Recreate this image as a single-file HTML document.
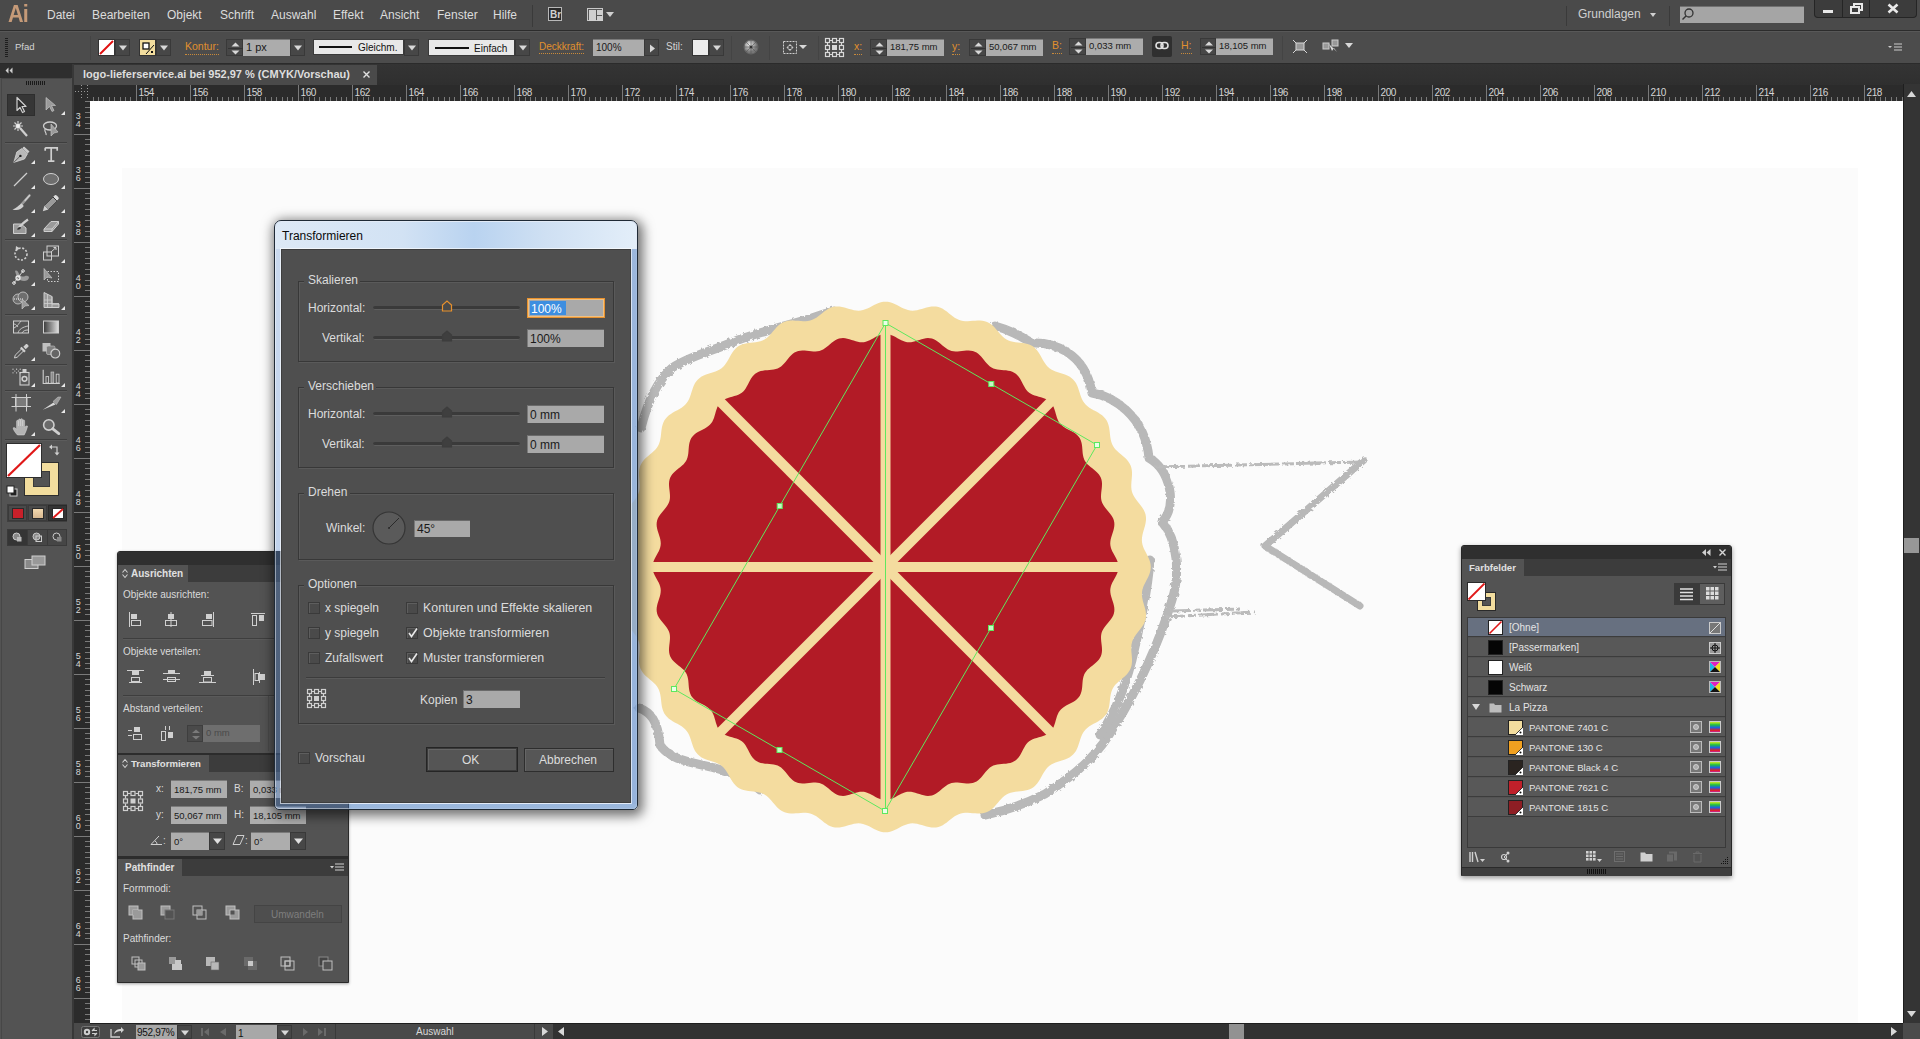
<!DOCTYPE html>
<html><head><meta charset="utf-8"><style>
html,body{margin:0;padding:0;width:1920px;height:1039px;overflow:hidden;background:#535353;}
body{position:relative;font-family:"Liberation Sans",sans-serif;}
div{position:absolute;box-sizing:border-box;}
.t{white-space:nowrap;line-height:1.15;}
svg{overflow:visible}
</style></head><body>
<div style="left:0px;top:64px;width:74px;height:975px;background:#535353;"></div>
<div style="left:72px;top:64px;width:2px;height:975px;background:#383838;"></div>
<div style="left:74px;top:64px;width:1846px;height:21px;background:linear-gradient(#343434,#2f2f2f);"></div>
<div style="left:74px;top:65px;width:303px;height:20px;background:#4a4a4a;"></div>
<div class="t" style="left:83px;top:67px;font-size:11px;color:#dedede;font-weight:bold;line-height:14px;">logo-lieferservice.ai bei 952,97 % (CMYK/Vorschau)</div>
<svg style="position:absolute;left:363px;top:71px" width="7" height="7"><path d="M0.5 0.5L6.5 6.5M6.5 0.5L0.5 6.5" stroke="#e0e0e0" stroke-width="1.4"/></svg>
<svg style="position:absolute;left:0;top:0" width="1920" height="1039"><rect x="74" y="85" width="1829" height="16" fill="#2b2b2b"/><rect x="74" y="101" width="16" height="922" fill="#2b2b2b"/><path d="M93.5 97V101M98.5 97V101M103.5 97V101M109.5 97V101M114.5 97V101M120.5 97V101M125.5 97V101M130.5 97V101M136.5 85V101M141.5 97V101M147.5 97V101M152.5 97V101M157.5 97V101M163.5 97V101M168.5 97V101M174.5 97V101M179.5 97V101M184.5 97V101M190.5 85V101M195.5 97V101M201.5 97V101M206.5 97V101M211.5 97V101M217.5 97V101M222.5 97V101M228.5 97V101M233.5 97V101M238.5 97V101M244.5 85V101M249.5 97V101M255.5 97V101M260.5 97V101M265.5 97V101M271.5 97V101M276.5 97V101M282.5 97V101M287.5 97V101M292.5 97V101M298.5 85V101M303.5 97V101M309.5 97V101M314.5 97V101M319.5 97V101M325.5 97V101M330.5 97V101M336.5 97V101M341.5 97V101M346.5 97V101M352.5 85V101M357.5 97V101M363.5 97V101M368.5 97V101M373.5 97V101M379.5 97V101M384.5 97V101M390.5 97V101M395.5 97V101M400.5 97V101M406.5 85V101M411.5 97V101M417.5 97V101M422.5 97V101M427.5 97V101M433.5 97V101M438.5 97V101M444.5 97V101M449.5 97V101M454.5 97V101M460.5 85V101M465.5 97V101M471.5 97V101M476.5 97V101M481.5 97V101M487.5 97V101M492.5 97V101M498.5 97V101M503.5 97V101M508.5 97V101M514.5 85V101M519.5 97V101M525.5 97V101M530.5 97V101M535.5 97V101M541.5 97V101M546.5 97V101M552.5 97V101M557.5 97V101M562.5 97V101M568.5 85V101M573.5 97V101M579.5 97V101M584.5 97V101M589.5 97V101M595.5 97V101M600.5 97V101M606.5 97V101M611.5 97V101M616.5 97V101M622.5 85V101M627.5 97V101M633.5 97V101M638.5 97V101M643.5 97V101M649.5 97V101M654.5 97V101M660.5 97V101M665.5 97V101M670.5 97V101M676.5 85V101M681.5 97V101M687.5 97V101M692.5 97V101M697.5 97V101M703.5 97V101M708.5 97V101M714.5 97V101M719.5 97V101M724.5 97V101M730.5 85V101M735.5 97V101M741.5 97V101M746.5 97V101M751.5 97V101M757.5 97V101M762.5 97V101M768.5 97V101M773.5 97V101M778.5 97V101M784.5 85V101M789.5 97V101M795.5 97V101M800.5 97V101M805.5 97V101M811.5 97V101M816.5 97V101M822.5 97V101M827.5 97V101M832.5 97V101M838.5 85V101M843.5 97V101M849.5 97V101M854.5 97V101M859.5 97V101M865.5 97V101M870.5 97V101M876.5 97V101M881.5 97V101M886.5 97V101M892.5 85V101M897.5 97V101M903.5 97V101M908.5 97V101M913.5 97V101M919.5 97V101M924.5 97V101M930.5 97V101M935.5 97V101M940.5 97V101M946.5 85V101M951.5 97V101M957.5 97V101M962.5 97V101M967.5 97V101M973.5 97V101M978.5 97V101M984.5 97V101M989.5 97V101M994.5 97V101M1000.5 85V101M1005.5 97V101M1011.5 97V101M1016.5 97V101M1021.5 97V101M1027.5 97V101M1032.5 97V101M1038.5 97V101M1043.5 97V101M1048.5 97V101M1054.5 85V101M1059.5 97V101M1065.5 97V101M1070.5 97V101M1075.5 97V101M1081.5 97V101M1086.5 97V101M1092.5 97V101M1097.5 97V101M1102.5 97V101M1108.5 85V101M1113.5 97V101M1119.5 97V101M1124.5 97V101M1129.5 97V101M1135.5 97V101M1140.5 97V101M1146.5 97V101M1151.5 97V101M1156.5 97V101M1162.5 85V101M1167.5 97V101M1173.5 97V101M1178.5 97V101M1183.5 97V101M1189.5 97V101M1194.5 97V101M1200.5 97V101M1205.5 97V101M1210.5 97V101M1216.5 85V101M1221.5 97V101M1227.5 97V101M1232.5 97V101M1237.5 97V101M1243.5 97V101M1248.5 97V101M1254.5 97V101M1259.5 97V101M1264.5 97V101M1270.5 85V101M1275.5 97V101M1281.5 97V101M1286.5 97V101M1291.5 97V101M1297.5 97V101M1302.5 97V101M1308.5 97V101M1313.5 97V101M1318.5 97V101M1324.5 85V101M1329.5 97V101M1335.5 97V101M1340.5 97V101M1345.5 97V101M1351.5 97V101M1356.5 97V101M1362.5 97V101M1367.5 97V101M1372.5 97V101M1378.5 85V101M1383.5 97V101M1389.5 97V101M1394.5 97V101M1399.5 97V101M1405.5 97V101M1410.5 97V101M1416.5 97V101M1421.5 97V101M1426.5 97V101M1432.5 85V101M1437.5 97V101M1443.5 97V101M1448.5 97V101M1453.5 97V101M1459.5 97V101M1464.5 97V101M1470.5 97V101M1475.5 97V101M1480.5 97V101M1486.5 85V101M1491.5 97V101M1497.5 97V101M1502.5 97V101M1507.5 97V101M1513.5 97V101M1518.5 97V101M1524.5 97V101M1529.5 97V101M1534.5 97V101M1540.5 85V101M1545.5 97V101M1551.5 97V101M1556.5 97V101M1561.5 97V101M1567.5 97V101M1572.5 97V101M1578.5 97V101M1583.5 97V101M1588.5 97V101M1594.5 85V101M1599.5 97V101M1605.5 97V101M1610.5 97V101M1615.5 97V101M1621.5 97V101M1626.5 97V101M1632.5 97V101M1637.5 97V101M1642.5 97V101M1648.5 85V101M1653.5 97V101M1659.5 97V101M1664.5 97V101M1669.5 97V101M1675.5 97V101M1680.5 97V101M1686.5 97V101M1691.5 97V101M1696.5 97V101M1702.5 85V101M1707.5 97V101M1713.5 97V101M1718.5 97V101M1723.5 97V101M1729.5 97V101M1734.5 97V101M1740.5 97V101M1745.5 97V101M1750.5 97V101M1756.5 85V101M1761.5 97V101M1767.5 97V101M1772.5 97V101M1777.5 97V101M1783.5 97V101M1788.5 97V101M1794.5 97V101M1799.5 97V101M1804.5 97V101M1810.5 85V101M1815.5 97V101M1821.5 97V101M1826.5 97V101M1831.5 97V101M1837.5 97V101M1842.5 97V101M1848.5 97V101M1853.5 97V101M1858.5 97V101M1864.5 85V101M1869.5 97V101M1875.5 97V101M1880.5 97V101M1885.5 97V101M1891.5 97V101M1896.5 97V101M1902.5 97V101" stroke="#7a7a7a" stroke-width="1"/><g font-family="Liberation Sans" font-size="10" fill="#d6d6d6" letter-spacing="-0.5"><text x="138.6" y="96">154</text><text x="192.6" y="96">156</text><text x="246.6" y="96">158</text><text x="300.6" y="96">160</text><text x="354.6" y="96">162</text><text x="408.6" y="96">164</text><text x="462.6" y="96">166</text><text x="516.6" y="96">168</text><text x="570.6" y="96">170</text><text x="624.6" y="96">172</text><text x="678.6" y="96">174</text><text x="732.6" y="96">176</text><text x="786.6" y="96">178</text><text x="840.6" y="96">180</text><text x="894.6" y="96">182</text><text x="948.6" y="96">184</text><text x="1002.6" y="96">186</text><text x="1056.6" y="96">188</text><text x="1110.6" y="96">190</text><text x="1164.6" y="96">192</text><text x="1218.6" y="96">194</text><text x="1272.6" y="96">196</text><text x="1326.6" y="96">198</text><text x="1380.6" y="96">200</text><text x="1434.6" y="96">202</text><text x="1488.6" y="96">204</text><text x="1542.6" y="96">206</text><text x="1596.6" y="96">208</text><text x="1650.6" y="96">210</text><text x="1704.6" y="96">212</text><text x="1758.6" y="96">214</text><text x="1812.6" y="96">216</text><text x="1866.6" y="96">218</text></g><path d="M85 101.5H90M85 107.5H90M85 112.5H90M85 117.5H90M85 123.5H90M85 128.5H90M74 134.5H90M85 139.5H90M85 144.5H90M85 150.5H90M85 155.5H90M85 161.5H90M85 166.5H90M85 172.5H90M85 177.5H90M85 182.5H90M74 188.5H90M85 193.5H90M85 198.5H90M85 204.5H90M85 209.5H90M85 215.5H90M85 220.5H90M85 226.5H90M85 231.5H90M85 236.5H90M74 242.5H90M85 247.5H90M85 252.5H90M85 258.5H90M85 263.5H90M85 269.5H90M85 274.5H90M85 280.5H90M85 285.5H90M85 290.5H90M74 296.5H90M85 301.5H90M85 306.5H90M85 312.5H90M85 317.5H90M85 323.5H90M85 328.5H90M85 334.5H90M85 339.5H90M85 344.5H90M74 350.5H90M85 355.5H90M85 360.5H90M85 366.5H90M85 371.5H90M85 377.5H90M85 382.5H90M85 388.5H90M85 393.5H90M85 398.5H90M74 404.5H90M85 409.5H90M85 414.5H90M85 420.5H90M85 425.5H90M85 431.5H90M85 436.5H90M85 442.5H90M85 447.5H90M85 452.5H90M74 458.5H90M85 463.5H90M85 468.5H90M85 474.5H90M85 479.5H90M85 485.5H90M85 490.5H90M85 496.5H90M85 501.5H90M85 506.5H90M74 512.5H90M85 517.5H90M85 522.5H90M85 528.5H90M85 533.5H90M85 539.5H90M85 544.5H90M85 550.5H90M85 555.5H90M85 560.5H90M74 566.5H90M85 571.5H90M85 576.5H90M85 582.5H90M85 587.5H90M85 593.5H90M85 598.5H90M85 604.5H90M85 609.5H90M85 614.5H90M74 620.5H90M85 625.5H90M85 630.5H90M85 636.5H90M85 641.5H90M85 647.5H90M85 652.5H90M85 658.5H90M85 663.5H90M85 668.5H90M74 674.5H90M85 679.5H90M85 684.5H90M85 690.5H90M85 695.5H90M85 701.5H90M85 706.5H90M85 712.5H90M85 717.5H90M85 722.5H90M74 728.5H90M85 733.5H90M85 738.5H90M85 744.5H90M85 749.5H90M85 755.5H90M85 760.5H90M85 766.5H90M85 771.5H90M85 776.5H90M74 782.5H90M85 787.5H90M85 792.5H90M85 798.5H90M85 803.5H90M85 809.5H90M85 814.5H90M85 820.5H90M85 825.5H90M85 830.5H90M74 836.5H90M85 841.5H90M85 846.5H90M85 852.5H90M85 857.5H90M85 863.5H90M85 868.5H90M85 874.5H90M85 879.5H90M85 884.5H90M74 890.5H90M85 895.5H90M85 900.5H90M85 906.5H90M85 911.5H90M85 917.5H90M85 922.5H90M85 928.5H90M85 933.5H90M85 938.5H90M74 944.5H90M85 949.5H90M85 954.5H90M85 960.5H90M85 965.5H90M85 971.5H90M85 976.5H90M85 982.5H90M85 987.5H90M85 992.5H90M74 998.5H90M85 1003.5H90M85 1008.5H90M85 1014.5H90M85 1019.5H90" stroke="#7a7a7a" stroke-width="1"/><g font-family="Liberation Sans" font-size="9" fill="#d6d6d6"><text x="75.8" y="118.7">3</text><text x="75.8" y="127.1">4</text><text x="75.8" y="172.7">3</text><text x="75.8" y="181.1">6</text><text x="75.8" y="226.7">3</text><text x="75.8" y="235.1">8</text><text x="75.8" y="280.7">4</text><text x="75.8" y="289.1">0</text><text x="75.8" y="334.7">4</text><text x="75.8" y="343.1">2</text><text x="75.8" y="388.7">4</text><text x="75.8" y="397.1">4</text><text x="75.8" y="442.7">4</text><text x="75.8" y="451.1">6</text><text x="75.8" y="496.7">4</text><text x="75.8" y="505.1">8</text><text x="75.8" y="550.7">5</text><text x="75.8" y="559.1">0</text><text x="75.8" y="604.7">5</text><text x="75.8" y="613.1">2</text><text x="75.8" y="658.7">5</text><text x="75.8" y="667.1">4</text><text x="75.8" y="712.7">5</text><text x="75.8" y="721.1">6</text><text x="75.8" y="766.7">5</text><text x="75.8" y="775.1">8</text><text x="75.8" y="820.7">6</text><text x="75.8" y="829.1">0</text><text x="75.8" y="874.7">6</text><text x="75.8" y="883.1">2</text><text x="75.8" y="928.7">6</text><text x="75.8" y="937.1">4</text><text x="75.8" y="982.7">6</text><text x="75.8" y="991.1">6</text></g><path d="M75 91.5H89M87.5 85V99M81.5 85V99" stroke="#9a9a9a" stroke-dasharray="1 2" stroke-width="1"/></svg>
<div style="left:90px;top:101px;width:1813px;height:922px;background:#ffffff;"></div>
<div style="left:122px;top:168px;width:1736px;height:855px;background:#fbfbfb;"></div>
<div style="left:1903px;top:84px;width:17px;height:939px;background:#343434;border-left:1px solid #1e1e1e;box-sizing:border-box;"></div>
<svg style="position:absolute;left:1906px;top:90px" width="11" height="8"><path d="M1 7H10L5.5 1Z" fill="#d8d8d8"/></svg>
<svg style="position:absolute;left:1906px;top:1010px" width="11" height="8"><path d="M1 1H10L5.5 7Z" fill="#d8d8d8"/></svg>
<div style="left:1904px;top:538px;width:15px;height:15px;background:#979797;"></div>
<div style="left:74px;top:1023px;width:1846px;height:16px;background:#4a4a4a;"></div>
<div style="left:90px;top:1023px;width:1813px;height:1px;background:#1e1e1e;"></div>
<div style="left:553px;top:1024px;width:1350px;height:15px;background:#323232;"></div>
<div style="left:1229px;top:1024px;width:15px;height:15px;background:#929292;"></div>
<div style="left:1903px;top:1023px;width:17px;height:16px;background:#4b4b4b;"></div>
<svg style="position:absolute;left:1889px;top:1026px" width="9" height="11"><path d="M2 1V10L8 5.5Z" fill="#d8d8d8"/></svg>
<svg style="position:absolute;left:557px;top:1026px" width="9" height="11"><path d="M7 1V10L1 5.5Z" fill="#d8d8d8"/></svg>
<svg style="position:absolute;left:540px;top:1026px" width="9" height="11"><path d="M2 1V10L8 5.5Z" fill="#d8d8d8"/></svg>
<div style="left:534px;top:1024px;width:1px;height:15px;background:#3a3a3a;"></div>
<div style="left:335px;top:1024px;width:1px;height:15px;background:#3a3a3a;"></div>
<svg style="position:absolute;left:81px;top:1026px" width="20" height="12"><rect x="0.5" y="0.5" width="18" height="11" rx="2" fill="#3e3e3e" stroke="#777"/><circle cx="6" cy="6" r="3.2" fill="#d0d0d0"/><circle cx="6" cy="6" r="1.2" fill="#3e3e3e"/><path d="M11 5L13 3V4.5H16M16 7L14 9V7.5H11" stroke="#d0d0d0" stroke-width="1.2" fill="none"/></svg>
<svg style="position:absolute;left:110px;top:1025px" width="15" height="13"><path d="M1 4V12H10" stroke="#d0d0d0" stroke-width="1.3" fill="none"/><path d="M4 9C5 5 8 4 11 4V2L14 5L11 8V6C8 6 6 7 4 9Z" fill="#d0d0d0"/></svg>
<div style="left:136px;top:1025px;width:41px;height:14px;background:#a8a8a8;"><div class="t" style="left:1px;top:1px;font-size:10px;color:#111;line-height:13px;letter-spacing:-0.3px">952,97%</div></div>
<div style="left:177px;top:1025px;width:15px;height:14px;background:#474747;border:1px solid #393939;box-sizing:border-box;"><svg style="position:absolute;left:3px;top:4px" width="8" height="6"><path d="M0 0.5H8L4 5.5Z" fill="#d8d8d8"/></svg></div>
<svg style="position:absolute;left:201px;top:1027px" width="30" height="10"><path d="M1 1V9" stroke="#6a6a6a" stroke-width="2"/><path d="M8 1V9L3 5Z" fill="#6a6a6a"/><path d="M25 1V9L19 5Z" fill="#6a6a6a"/></svg>
<div style="left:236px;top:1025px;width:41px;height:14px;background:#a8a8a8;"><div class="t" style="left:2px;top:2px;font-size:10px;color:#111;line-height:13px">1</div></div>
<div style="left:277px;top:1025px;width:15px;height:14px;background:#474747;border:1px solid #393939;box-sizing:border-box;"><svg style="position:absolute;left:3px;top:4px" width="8" height="6"><path d="M0 0.5H8L4 5.5Z" fill="#d8d8d8"/></svg></div>
<svg style="position:absolute;left:300px;top:1027px" width="30" height="10"><path d="M3 1V9L8 5Z" fill="#6a6a6a"/><path d="M18 1V9L23 5Z" fill="#6a6a6a"/><path d="M25 1V9" stroke="#6a6a6a" stroke-width="2"/></svg>
<div class="t" style="left:416px;top:1025px;font-size:10px;color:#d8d8d8;font-weight:normal;line-height:13px;">Auswahl</div>
<svg style="position:absolute;left:0;top:0" width="1920" height="1039"><defs><clipPath id="cv"><rect x="90" y="100" width="1813" height="923"/></clipPath></defs><g clip-path="url(#cv)"><filter id="rough" x="-5%" y="-5%" width="110%" height="110%"><feTurbulence type="fractalNoise" baseFrequency="0.3" numOctaves="2" seed="3" result="n"/><feDisplacementMap in="SourceGraphic" in2="n" scale="3.5"/></filter><g filter="url(#rough)"><path d="M641 428 C648 400 658 380 672 368 C690 356 710 352 738 340 C760 332 785 326 812 318 C820 315 826 313 834 311" fill="none" stroke="#b8b8b8" stroke-width="9" stroke-linecap="round" stroke-linejoin="round"/><path d="M995 326 C1010 330 1020 336 1032 343 C1050 342 1085 350 1092 393 C1112 396 1145 415 1149 458 C1170 470 1178 505 1162 522 C1178 540 1180 575 1172 600 C1160 640 1138 690 1115 725 C1100 752 1080 772 1045 794 C1025 804 1005 811 985 815" fill="none" stroke="#b8b8b8" stroke-width="9" stroke-linecap="round" stroke-linejoin="round"/><path d="M1150 560 C1148 590 1140 625 1132 660 C1124 690 1116 710 1100 735" fill="none" stroke="#b8b8b8" stroke-width="9" stroke-linecap="round" stroke-linejoin="round"/><path d="M639 708 C650 712 658 720 660 745 C670 760 690 762 715 768 C730 772 745 776 760 790" fill="none" stroke="#b8b8b8" stroke-width="9" stroke-linecap="round" stroke-linejoin="round"/><path d="M1155 467 L1362 462" stroke="#bbbbbb" stroke-width="3" fill="none" stroke-dasharray="30 3 12 2"/><path d="M1364 460 L1265 546 L1360 606" stroke="#b8b8b8" stroke-width="7" fill="none" stroke-linecap="round" stroke-linejoin="round"/><path d="M1165 617 L1255 612M1170 611L1240 609" stroke="#bbbbbb" stroke-width="3" fill="none" stroke-dasharray="20 3 8 2"/></g><path d="M1150.80,567.00 L1150.64,564.69 L1150.18,562.38 L1149.45,560.09 L1148.51,557.82 L1147.41,555.56 L1146.24,553.33 L1145.09,551.12 L1144.03,548.92 L1143.13,546.72 L1142.45,544.52 L1142.02,542.30 L1141.87,540.05 L1141.99,537.78 L1142.34,535.46 L1142.88,533.12 L1143.54,530.73 L1144.26,528.33 L1144.94,525.91 L1145.51,523.49 L1145.89,521.09 L1146.03,518.71 L1145.89,516.39 L1145.44,514.12 L1144.68,511.91 L1143.64,509.77 L1142.37,507.70 L1140.92,505.68 L1139.36,503.71 L1137.78,501.76 L1136.25,499.81 L1134.86,497.85 L1133.64,495.85 L1132.67,493.79 L1131.95,491.65 L1131.49,489.44 L1131.28,487.14 L1131.27,484.77 L1131.41,482.33 L1131.63,479.84 L1131.85,477.34 L1132.00,474.84 L1132.01,472.38 L1131.80,469.98 L1131.35,467.67 L1130.61,465.47 L1129.57,463.40 L1128.27,461.44 L1126.72,459.60 L1124.97,457.87 L1123.10,456.21 L1121.17,454.59 L1119.26,452.99 L1117.43,451.36 L1115.76,449.68 L1114.29,447.90 L1113.04,446.01 L1112.04,444.00 L1111.28,441.85 L1110.72,439.58 L1110.32,437.20 L1110.02,434.75 L1109.76,432.25 L1109.47,429.75 L1109.07,427.30 L1108.50,424.93 L1107.72,422.69 L1106.70,420.59 L1105.41,418.67 L1103.87,416.92 L1102.09,415.34 L1100.12,413.91 L1098.01,412.60 L1095.82,411.37 L1093.61,410.18 L1091.45,408.97 L1089.41,407.69 L1087.53,406.30 L1085.84,404.77 L1084.35,403.08 L1083.09,401.21 L1082.01,399.17 L1081.09,396.98 L1080.29,394.67 L1079.54,392.29 L1078.78,389.89 L1077.97,387.52 L1077.03,385.25 L1075.93,383.11 L1074.62,381.15 L1073.10,379.40 L1071.35,377.88 L1069.39,376.57 L1067.25,375.47 L1064.98,374.53 L1062.61,373.72 L1060.21,372.96 L1057.83,372.21 L1055.52,371.41 L1053.33,370.49 L1051.29,369.41 L1049.42,368.15 L1047.73,366.66 L1046.20,364.97 L1044.81,363.09 L1043.53,361.05 L1042.32,358.89 L1041.13,356.68 L1039.90,354.49 L1038.59,352.38 L1037.16,350.41 L1035.58,348.63 L1033.83,347.09 L1031.91,345.80 L1029.81,344.78 L1027.57,344.00 L1025.20,343.43 L1022.75,343.03 L1020.25,342.74 L1017.75,342.48 L1015.30,342.18 L1012.92,341.78 L1010.65,341.22 L1008.50,340.46 L1006.49,339.46 L1004.60,338.21 L1002.82,336.74 L1001.14,335.07 L999.51,333.24 L997.91,331.33 L996.29,329.40 L994.63,327.53 L992.90,325.78 L991.06,324.23 L989.10,322.93 L987.03,321.89 L984.83,321.15 L982.52,320.70 L980.12,320.49 L977.66,320.50 L975.16,320.65 L972.66,320.87 L970.17,321.09 L967.73,321.23 L965.36,321.22 L963.06,321.01 L960.85,320.55 L958.71,319.83 L956.65,318.86 L954.65,317.64 L952.69,316.25 L950.74,314.72 L948.79,313.14 L946.82,311.58 L944.80,310.13 L942.73,308.86 L940.59,307.82 L938.38,307.06 L936.11,306.61 L933.79,306.47 L931.41,306.61 L929.01,306.99 L926.59,307.56 L924.17,308.24 L921.77,308.96 L919.38,309.62 L917.04,310.16 L914.72,310.51 L912.45,310.63 L910.20,310.48 L907.98,310.05 L905.78,309.37 L903.58,308.47 L901.38,307.41 L899.17,306.26 L896.94,305.09 L894.68,303.99 L892.41,303.05 L890.12,302.32 L887.81,301.86 L885.50,301.70 L883.19,301.86 L880.88,302.32 L878.59,303.05 L876.32,303.99 L874.06,305.09 L871.83,306.26 L869.62,307.41 L867.42,308.47 L865.22,309.37 L863.02,310.05 L860.80,310.48 L858.55,310.63 L856.28,310.51 L853.96,310.16 L851.62,309.62 L849.23,308.96 L846.83,308.24 L844.41,307.56 L841.99,306.99 L839.59,306.61 L837.21,306.47 L834.89,306.61 L832.62,307.06 L830.41,307.82 L828.27,308.86 L826.20,310.13 L824.18,311.58 L822.21,313.14 L820.26,314.72 L818.31,316.25 L816.35,317.64 L814.35,318.86 L812.29,319.83 L810.15,320.55 L807.94,321.01 L805.64,321.22 L803.27,321.23 L800.83,321.09 L798.34,320.87 L795.84,320.65 L793.34,320.50 L790.88,320.49 L788.48,320.70 L786.17,321.15 L783.97,321.89 L781.90,322.93 L779.94,324.23 L778.10,325.78 L776.37,327.53 L774.71,329.40 L773.09,331.33 L771.49,333.24 L769.86,335.07 L768.18,336.74 L766.40,338.21 L764.51,339.46 L762.50,340.46 L760.35,341.22 L758.08,341.78 L755.70,342.18 L753.25,342.48 L750.75,342.74 L748.25,343.03 L745.80,343.43 L743.43,344.00 L741.19,344.78 L739.09,345.80 L737.17,347.09 L735.42,348.63 L733.84,350.41 L732.41,352.38 L731.10,354.49 L729.87,356.68 L728.68,358.89 L727.47,361.05 L726.19,363.09 L724.80,364.97 L723.27,366.66 L721.58,368.15 L719.71,369.41 L717.67,370.49 L715.48,371.41 L713.17,372.21 L710.79,372.96 L708.39,373.72 L706.02,374.53 L703.75,375.47 L701.61,376.57 L699.65,377.88 L697.90,379.40 L696.38,381.15 L695.07,383.11 L693.97,385.25 L693.03,387.52 L692.22,389.89 L691.46,392.29 L690.71,394.67 L689.91,396.98 L688.99,399.17 L687.91,401.21 L686.65,403.08 L685.16,404.77 L683.47,406.30 L681.59,407.69 L679.55,408.97 L677.39,410.18 L675.18,411.37 L672.99,412.60 L670.88,413.91 L668.91,415.34 L667.13,416.92 L665.59,418.67 L664.30,420.59 L663.28,422.69 L662.50,424.93 L661.93,427.30 L661.53,429.75 L661.24,432.25 L660.98,434.75 L660.68,437.20 L660.28,439.58 L659.72,441.85 L658.96,444.00 L657.96,446.01 L656.71,447.90 L655.24,449.68 L653.57,451.36 L651.74,452.99 L649.83,454.59 L647.90,456.21 L646.03,457.87 L644.28,459.60 L642.73,461.44 L641.43,463.40 L640.39,465.47 L639.65,467.67 L639.20,469.98 L638.99,472.38 L639.00,474.84 L639.15,477.34 L639.37,479.84 L639.59,482.33 L639.73,484.77 L639.72,487.14 L639.51,489.44 L639.05,491.65 L638.33,493.79 L637.36,495.85 L636.14,497.85 L634.75,499.81 L633.22,501.76 L631.64,503.71 L630.08,505.68 L628.63,507.70 L627.36,509.77 L626.32,511.91 L625.56,514.12 L625.11,516.39 L624.97,518.71 L625.11,521.09 L625.49,523.49 L626.06,525.91 L626.74,528.33 L627.46,530.73 L628.12,533.12 L628.66,535.46 L629.01,537.78 L629.13,540.05 L628.98,542.30 L628.55,544.52 L627.87,546.72 L626.97,548.92 L625.91,551.12 L624.76,553.33 L623.59,555.56 L622.49,557.82 L621.55,560.09 L620.82,562.38 L620.36,564.69 L620.20,567.00 L620.36,569.31 L620.82,571.62 L621.55,573.91 L622.49,576.18 L623.59,578.44 L624.76,580.67 L625.91,582.88 L626.97,585.08 L627.87,587.28 L628.55,589.48 L628.98,591.70 L629.13,593.95 L629.01,596.22 L628.66,598.54 L628.12,600.88 L627.46,603.27 L626.74,605.67 L626.06,608.09 L625.49,610.51 L625.11,612.91 L624.97,615.29 L625.11,617.61 L625.56,619.88 L626.32,622.09 L627.36,624.23 L628.63,626.30 L630.08,628.32 L631.64,630.29 L633.22,632.24 L634.75,634.19 L636.14,636.15 L637.36,638.15 L638.33,640.21 L639.05,642.35 L639.51,644.56 L639.72,646.86 L639.73,649.23 L639.59,651.67 L639.37,654.16 L639.15,656.66 L639.00,659.16 L638.99,661.62 L639.20,664.02 L639.65,666.33 L640.39,668.53 L641.43,670.60 L642.73,672.56 L644.28,674.40 L646.03,676.13 L647.90,677.79 L649.83,679.41 L651.74,681.01 L653.57,682.64 L655.24,684.32 L656.71,686.10 L657.96,687.99 L658.96,690.00 L659.72,692.15 L660.28,694.42 L660.68,696.80 L660.98,699.25 L661.24,701.75 L661.53,704.25 L661.93,706.70 L662.50,709.07 L663.28,711.31 L664.30,713.41 L665.59,715.33 L667.13,717.08 L668.91,718.66 L670.88,720.09 L672.99,721.40 L675.18,722.63 L677.39,723.82 L679.55,725.03 L681.59,726.31 L683.47,727.70 L685.16,729.23 L686.65,730.92 L687.91,732.79 L688.99,734.83 L689.91,737.02 L690.71,739.33 L691.46,741.71 L692.22,744.11 L693.03,746.48 L693.97,748.75 L695.07,750.89 L696.38,752.85 L697.90,754.60 L699.65,756.12 L701.61,757.43 L703.75,758.53 L706.02,759.47 L708.39,760.28 L710.79,761.04 L713.17,761.79 L715.48,762.59 L717.67,763.51 L719.71,764.59 L721.58,765.85 L723.27,767.34 L724.80,769.03 L726.19,770.91 L727.47,772.95 L728.68,775.11 L729.87,777.32 L731.10,779.51 L732.41,781.62 L733.84,783.59 L735.42,785.37 L737.17,786.91 L739.09,788.20 L741.19,789.22 L743.43,790.00 L745.80,790.57 L748.25,790.97 L750.75,791.26 L753.25,791.52 L755.70,791.82 L758.08,792.22 L760.35,792.78 L762.50,793.54 L764.51,794.54 L766.40,795.79 L768.18,797.26 L769.86,798.93 L771.49,800.76 L773.09,802.67 L774.71,804.60 L776.37,806.47 L778.10,808.22 L779.94,809.77 L781.90,811.07 L783.97,812.11 L786.17,812.85 L788.48,813.30 L790.88,813.51 L793.34,813.50 L795.84,813.35 L798.34,813.13 L800.83,812.91 L803.27,812.77 L805.64,812.78 L807.94,812.99 L810.15,813.45 L812.29,814.17 L814.35,815.14 L816.35,816.36 L818.31,817.75 L820.26,819.28 L822.21,820.86 L824.18,822.42 L826.20,823.87 L828.27,825.14 L830.41,826.18 L832.62,826.94 L834.89,827.39 L837.21,827.53 L839.59,827.39 L841.99,827.01 L844.41,826.44 L846.83,825.76 L849.23,825.04 L851.62,824.38 L853.96,823.84 L856.28,823.49 L858.55,823.37 L860.80,823.52 L863.02,823.95 L865.22,824.63 L867.42,825.53 L869.62,826.59 L871.83,827.74 L874.06,828.91 L876.32,830.01 L878.59,830.95 L880.88,831.68 L883.19,832.14 L885.50,832.30 L887.81,832.14 L890.12,831.68 L892.41,830.95 L894.68,830.01 L896.94,828.91 L899.17,827.74 L901.38,826.59 L903.58,825.53 L905.78,824.63 L907.98,823.95 L910.20,823.52 L912.45,823.37 L914.72,823.49 L917.04,823.84 L919.38,824.38 L921.77,825.04 L924.17,825.76 L926.59,826.44 L929.01,827.01 L931.41,827.39 L933.79,827.53 L936.11,827.39 L938.38,826.94 L940.59,826.18 L942.73,825.14 L944.80,823.87 L946.82,822.42 L948.79,820.86 L950.74,819.28 L952.69,817.75 L954.65,816.36 L956.65,815.14 L958.71,814.17 L960.85,813.45 L963.06,812.99 L965.36,812.78 L967.73,812.77 L970.17,812.91 L972.66,813.13 L975.16,813.35 L977.66,813.50 L980.12,813.51 L982.52,813.30 L984.83,812.85 L987.03,812.11 L989.10,811.07 L991.06,809.77 L992.90,808.22 L994.63,806.47 L996.29,804.60 L997.91,802.67 L999.51,800.76 L1001.14,798.93 L1002.82,797.26 L1004.60,795.79 L1006.49,794.54 L1008.50,793.54 L1010.65,792.78 L1012.92,792.22 L1015.30,791.82 L1017.75,791.52 L1020.25,791.26 L1022.75,790.97 L1025.20,790.57 L1027.57,790.00 L1029.81,789.22 L1031.91,788.20 L1033.83,786.91 L1035.58,785.37 L1037.16,783.59 L1038.59,781.62 L1039.90,779.51 L1041.13,777.32 L1042.32,775.11 L1043.53,772.95 L1044.81,770.91 L1046.20,769.03 L1047.73,767.34 L1049.42,765.85 L1051.29,764.59 L1053.33,763.51 L1055.52,762.59 L1057.83,761.79 L1060.21,761.04 L1062.61,760.28 L1064.98,759.47 L1067.25,758.53 L1069.39,757.43 L1071.35,756.12 L1073.10,754.60 L1074.62,752.85 L1075.93,750.89 L1077.03,748.75 L1077.97,746.48 L1078.78,744.11 L1079.54,741.71 L1080.29,739.33 L1081.09,737.02 L1082.01,734.83 L1083.09,732.79 L1084.35,730.92 L1085.84,729.23 L1087.53,727.70 L1089.41,726.31 L1091.45,725.03 L1093.61,723.82 L1095.82,722.63 L1098.01,721.40 L1100.12,720.09 L1102.09,718.66 L1103.87,717.08 L1105.41,715.33 L1106.70,713.41 L1107.72,711.31 L1108.50,709.07 L1109.07,706.70 L1109.47,704.25 L1109.76,701.75 L1110.02,699.25 L1110.32,696.80 L1110.72,694.42 L1111.28,692.15 L1112.04,690.00 L1113.04,687.99 L1114.29,686.10 L1115.76,684.32 L1117.43,682.64 L1119.26,681.01 L1121.17,679.41 L1123.10,677.79 L1124.97,676.13 L1126.72,674.40 L1128.27,672.56 L1129.57,670.60 L1130.61,668.53 L1131.35,666.33 L1131.80,664.02 L1132.01,661.62 L1132.00,659.16 L1131.85,656.66 L1131.63,654.16 L1131.41,651.67 L1131.27,649.23 L1131.28,646.86 L1131.49,644.56 L1131.95,642.35 L1132.67,640.21 L1133.64,638.15 L1134.86,636.15 L1136.25,634.19 L1137.78,632.24 L1139.36,630.29 L1140.92,628.32 L1142.37,626.30 L1143.64,624.23 L1144.68,622.09 L1145.44,619.88 L1145.89,617.61 L1146.03,615.29 L1145.89,612.91 L1145.51,610.51 L1144.94,608.09 L1144.26,605.67 L1143.54,603.27 L1142.88,600.88 L1142.34,598.54 L1141.99,596.22 L1141.87,593.95 L1142.02,591.70 L1142.45,589.48 L1143.13,587.28 L1144.03,585.08 L1145.09,582.88 L1146.24,580.67 L1147.41,578.44 L1148.51,576.18 L1149.45,573.91 L1150.18,571.62 L1150.64,569.31Z" fill="#f4dc9f"/><path d="M1118.60,567.00 L1118.45,564.97 L1118.02,562.94 L1117.33,560.93 L1116.44,558.94 L1115.41,556.96 L1114.31,555.01 L1113.23,553.07 L1112.23,551.15 L1111.39,549.22 L1110.76,547.29 L1110.37,545.35 L1110.24,543.38 L1110.37,541.38 L1110.72,539.35 L1111.25,537.28 L1111.90,535.18 L1112.60,533.06 L1113.27,530.92 L1113.84,528.79 L1114.23,526.67 L1114.39,524.58 L1114.28,522.53 L1113.89,520.53 L1113.20,518.60 L1112.25,516.73 L1111.08,514.92 L1109.74,513.16 L1108.30,511.45 L1106.85,509.76 L1105.44,508.07 L1104.16,506.36 L1103.05,504.62 L1102.17,502.82 L1101.54,500.95 L1101.15,499.01 L1101.00,496.98 L1101.04,494.88 L1101.22,492.72 L1101.48,490.52 L1101.75,488.29 L1101.94,486.07 L1102.01,483.89 L1101.87,481.77 L1101.50,479.73 L1100.86,477.80 L1099.94,475.98 L1098.77,474.27 L1097.36,472.67 L1095.77,471.17 L1094.06,469.74 L1092.30,468.36 L1090.56,466.99 L1088.90,465.59 L1087.39,464.13 L1086.07,462.59 L1084.97,460.94 L1084.09,459.17 L1083.45,457.28 L1082.99,455.26 L1082.69,453.15 L1082.49,450.96 L1082.33,448.73 L1082.13,446.51 L1081.83,444.32 L1081.38,442.21 L1080.73,440.21 L1079.85,438.36 L1078.72,436.67 L1077.35,435.15 L1075.75,433.78 L1073.98,432.56 L1072.07,431.45 L1070.09,430.41 L1068.09,429.41 L1066.15,428.39 L1064.31,427.30 L1062.62,426.11 L1061.12,424.79 L1059.82,423.30 L1058.72,421.65 L1057.80,419.84 L1057.03,417.89 L1056.38,415.82 L1055.77,413.69 L1055.17,411.53 L1054.50,409.41 L1053.72,407.36 L1052.78,405.46 L1051.66,403.72 L1050.33,402.17 L1048.78,400.84 L1047.04,399.72 L1045.14,398.78 L1043.09,398.00 L1040.97,397.33 L1038.81,396.73 L1036.68,396.12 L1034.61,395.47 L1032.66,394.70 L1030.85,393.78 L1029.20,392.68 L1027.71,391.38 L1026.39,389.88 L1025.20,388.19 L1024.11,386.35 L1023.09,384.41 L1022.09,382.41 L1021.05,380.43 L1019.94,378.52 L1018.72,376.75 L1017.35,375.15 L1015.83,373.78 L1014.14,372.65 L1012.29,371.77 L1010.29,371.12 L1008.18,370.67 L1005.99,370.37 L1003.77,370.17 L1001.54,370.01 L999.35,369.81 L997.24,369.51 L995.22,369.05 L993.33,368.41 L991.56,367.53 L989.91,366.43 L988.37,365.11 L986.91,363.60 L985.51,361.94 L984.14,360.20 L982.76,358.44 L981.33,356.73 L979.83,355.14 L978.23,353.73 L976.52,352.56 L974.70,351.64 L972.77,351.00 L970.73,350.63 L968.61,350.49 L966.43,350.56 L964.21,350.75 L961.98,351.02 L959.78,351.28 L957.62,351.46 L955.52,351.50 L953.49,351.35 L951.55,350.96 L949.68,350.33 L947.88,349.45 L946.14,348.34 L944.43,347.06 L942.74,345.65 L941.05,344.20 L939.34,342.76 L937.58,341.42 L935.77,340.25 L933.90,339.30 L931.97,338.61 L929.97,338.22 L927.92,338.11 L925.83,338.27 L923.71,338.66 L921.58,339.23 L919.44,339.90 L917.32,340.60 L915.22,341.25 L913.15,341.78 L911.12,342.13 L909.12,342.26 L907.15,342.13 L905.21,341.74 L903.28,341.11 L901.35,340.27 L899.43,339.27 L897.49,338.19 L895.54,337.09 L893.56,336.06 L891.57,335.17 L889.56,334.48 L887.53,334.05 L885.50,333.90 L883.47,334.05 L881.44,334.48 L879.43,335.17 L877.44,336.06 L875.46,337.09 L873.51,338.19 L871.57,339.27 L869.65,340.27 L867.72,341.11 L865.79,341.74 L863.85,342.13 L861.88,342.26 L859.88,342.13 L857.85,341.78 L855.78,341.25 L853.68,340.60 L851.56,339.90 L849.42,339.23 L847.29,338.66 L845.17,338.27 L843.08,338.11 L841.03,338.22 L839.03,338.61 L837.10,339.30 L835.23,340.25 L833.42,341.42 L831.66,342.76 L829.95,344.20 L828.26,345.65 L826.57,347.06 L824.86,348.34 L823.12,349.45 L821.32,350.33 L819.45,350.96 L817.51,351.35 L815.48,351.50 L813.38,351.46 L811.22,351.28 L809.02,351.02 L806.79,350.75 L804.57,350.56 L802.39,350.49 L800.27,350.63 L798.23,351.00 L796.30,351.64 L794.48,352.56 L792.77,353.73 L791.17,355.14 L789.67,356.73 L788.24,358.44 L786.86,360.20 L785.49,361.94 L784.09,363.60 L782.63,365.11 L781.09,366.43 L779.44,367.53 L777.67,368.41 L775.78,369.05 L773.76,369.51 L771.65,369.81 L769.46,370.01 L767.23,370.17 L765.01,370.37 L762.82,370.67 L760.71,371.12 L758.71,371.77 L756.86,372.65 L755.17,373.78 L753.65,375.15 L752.28,376.75 L751.06,378.52 L749.95,380.43 L748.91,382.41 L747.91,384.41 L746.89,386.35 L745.80,388.19 L744.61,389.88 L743.29,391.38 L741.80,392.68 L740.15,393.78 L738.34,394.70 L736.39,395.47 L734.32,396.12 L732.19,396.73 L730.03,397.33 L727.91,398.00 L725.86,398.78 L723.96,399.72 L722.22,400.84 L720.67,402.17 L719.34,403.72 L718.22,405.46 L717.28,407.36 L716.50,409.41 L715.83,411.53 L715.23,413.69 L714.62,415.82 L713.97,417.89 L713.20,419.84 L712.28,421.65 L711.18,423.30 L709.88,424.79 L708.38,426.11 L706.69,427.30 L704.85,428.39 L702.91,429.41 L700.91,430.41 L698.93,431.45 L697.02,432.56 L695.25,433.78 L693.65,435.15 L692.28,436.67 L691.15,438.36 L690.27,440.21 L689.62,442.21 L689.17,444.32 L688.87,446.51 L688.67,448.73 L688.51,450.96 L688.31,453.15 L688.01,455.26 L687.55,457.28 L686.91,459.17 L686.03,460.94 L684.93,462.59 L683.61,464.13 L682.10,465.59 L680.44,466.99 L678.70,468.36 L676.94,469.74 L675.23,471.17 L673.64,472.67 L672.23,474.27 L671.06,475.98 L670.14,477.80 L669.50,479.73 L669.13,481.77 L668.99,483.89 L669.06,486.07 L669.25,488.29 L669.52,490.52 L669.78,492.72 L669.96,494.88 L670.00,496.98 L669.85,499.01 L669.46,500.95 L668.83,502.82 L667.95,504.62 L666.84,506.36 L665.56,508.07 L664.15,509.76 L662.70,511.45 L661.26,513.16 L659.92,514.92 L658.75,516.73 L657.80,518.60 L657.11,520.53 L656.72,522.53 L656.61,524.58 L656.77,526.67 L657.16,528.79 L657.73,530.92 L658.40,533.06 L659.10,535.18 L659.75,537.28 L660.28,539.35 L660.63,541.38 L660.76,543.38 L660.63,545.35 L660.24,547.29 L659.61,549.22 L658.77,551.15 L657.77,553.07 L656.69,555.01 L655.59,556.96 L654.56,558.94 L653.67,560.93 L652.98,562.94 L652.55,564.97 L652.40,567.00 L652.55,569.03 L652.98,571.06 L653.67,573.07 L654.56,575.06 L655.59,577.04 L656.69,578.99 L657.77,580.93 L658.77,582.85 L659.61,584.78 L660.24,586.71 L660.63,588.65 L660.76,590.62 L660.63,592.62 L660.28,594.65 L659.75,596.72 L659.10,598.82 L658.40,600.94 L657.73,603.08 L657.16,605.21 L656.77,607.33 L656.61,609.42 L656.72,611.47 L657.11,613.47 L657.80,615.40 L658.75,617.27 L659.92,619.08 L661.26,620.84 L662.70,622.55 L664.15,624.24 L665.56,625.93 L666.84,627.64 L667.95,629.38 L668.83,631.18 L669.46,633.05 L669.85,634.99 L670.00,637.02 L669.96,639.12 L669.78,641.28 L669.52,643.48 L669.25,645.71 L669.06,647.93 L668.99,650.11 L669.13,652.23 L669.50,654.27 L670.14,656.20 L671.06,658.02 L672.23,659.73 L673.64,661.33 L675.23,662.83 L676.94,664.26 L678.70,665.64 L680.44,667.01 L682.10,668.41 L683.61,669.87 L684.93,671.41 L686.03,673.06 L686.91,674.83 L687.55,676.72 L688.01,678.74 L688.31,680.85 L688.51,683.04 L688.67,685.27 L688.87,687.49 L689.17,689.68 L689.62,691.79 L690.27,693.79 L691.15,695.64 L692.28,697.33 L693.65,698.85 L695.25,700.22 L697.02,701.44 L698.93,702.55 L700.91,703.59 L702.91,704.59 L704.85,705.61 L706.69,706.70 L708.38,707.89 L709.88,709.21 L711.18,710.70 L712.28,712.35 L713.20,714.16 L713.97,716.11 L714.62,718.18 L715.23,720.31 L715.83,722.47 L716.50,724.59 L717.28,726.64 L718.22,728.54 L719.34,730.28 L720.67,731.83 L722.22,733.16 L723.96,734.28 L725.86,735.22 L727.91,736.00 L730.03,736.67 L732.19,737.27 L734.32,737.88 L736.39,738.53 L738.34,739.30 L740.15,740.22 L741.80,741.32 L743.29,742.62 L744.61,744.12 L745.80,745.81 L746.89,747.65 L747.91,749.59 L748.91,751.59 L749.95,753.57 L751.06,755.48 L752.28,757.25 L753.65,758.85 L755.17,760.22 L756.86,761.35 L758.71,762.23 L760.71,762.88 L762.82,763.33 L765.01,763.63 L767.23,763.83 L769.46,763.99 L771.65,764.19 L773.76,764.49 L775.78,764.95 L777.67,765.59 L779.44,766.47 L781.09,767.57 L782.63,768.89 L784.09,770.40 L785.49,772.06 L786.86,773.80 L788.24,775.56 L789.67,777.27 L791.17,778.86 L792.77,780.27 L794.48,781.44 L796.30,782.36 L798.23,783.00 L800.27,783.37 L802.39,783.51 L804.57,783.44 L806.79,783.25 L809.02,782.98 L811.22,782.72 L813.38,782.54 L815.48,782.50 L817.51,782.65 L819.45,783.04 L821.32,783.67 L823.12,784.55 L824.86,785.66 L826.57,786.94 L828.26,788.35 L829.95,789.80 L831.66,791.24 L833.42,792.58 L835.23,793.75 L837.10,794.70 L839.03,795.39 L841.03,795.78 L843.08,795.89 L845.17,795.73 L847.29,795.34 L849.42,794.77 L851.56,794.10 L853.68,793.40 L855.78,792.75 L857.85,792.22 L859.88,791.87 L861.88,791.74 L863.85,791.87 L865.79,792.26 L867.72,792.89 L869.65,793.73 L871.57,794.73 L873.51,795.81 L875.46,796.91 L877.44,797.94 L879.43,798.83 L881.44,799.52 L883.47,799.95 L885.50,800.10 L887.53,799.95 L889.56,799.52 L891.57,798.83 L893.56,797.94 L895.54,796.91 L897.49,795.81 L899.43,794.73 L901.35,793.73 L903.28,792.89 L905.21,792.26 L907.15,791.87 L909.12,791.74 L911.12,791.87 L913.15,792.22 L915.22,792.75 L917.32,793.40 L919.44,794.10 L921.58,794.77 L923.71,795.34 L925.83,795.73 L927.92,795.89 L929.97,795.78 L931.97,795.39 L933.90,794.70 L935.77,793.75 L937.58,792.58 L939.34,791.24 L941.05,789.80 L942.74,788.35 L944.43,786.94 L946.14,785.66 L947.88,784.55 L949.68,783.67 L951.55,783.04 L953.49,782.65 L955.52,782.50 L957.62,782.54 L959.78,782.72 L961.98,782.98 L964.21,783.25 L966.43,783.44 L968.61,783.51 L970.73,783.37 L972.77,783.00 L974.70,782.36 L976.52,781.44 L978.23,780.27 L979.83,778.86 L981.33,777.27 L982.76,775.56 L984.14,773.80 L985.51,772.06 L986.91,770.40 L988.37,768.89 L989.91,767.57 L991.56,766.47 L993.33,765.59 L995.22,764.95 L997.24,764.49 L999.35,764.19 L1001.54,763.99 L1003.77,763.83 L1005.99,763.63 L1008.18,763.33 L1010.29,762.88 L1012.29,762.23 L1014.14,761.35 L1015.83,760.22 L1017.35,758.85 L1018.72,757.25 L1019.94,755.48 L1021.05,753.57 L1022.09,751.59 L1023.09,749.59 L1024.11,747.65 L1025.20,745.81 L1026.39,744.12 L1027.71,742.62 L1029.20,741.32 L1030.85,740.22 L1032.66,739.30 L1034.61,738.53 L1036.68,737.88 L1038.81,737.27 L1040.97,736.67 L1043.09,736.00 L1045.14,735.22 L1047.04,734.28 L1048.78,733.16 L1050.33,731.83 L1051.66,730.28 L1052.78,728.54 L1053.72,726.64 L1054.50,724.59 L1055.17,722.47 L1055.77,720.31 L1056.38,718.18 L1057.03,716.11 L1057.80,714.16 L1058.72,712.35 L1059.82,710.70 L1061.12,709.21 L1062.62,707.89 L1064.31,706.70 L1066.15,705.61 L1068.09,704.59 L1070.09,703.59 L1072.07,702.55 L1073.98,701.44 L1075.75,700.22 L1077.35,698.85 L1078.72,697.33 L1079.85,695.64 L1080.73,693.79 L1081.38,691.79 L1081.83,689.68 L1082.13,687.49 L1082.33,685.27 L1082.49,683.04 L1082.69,680.85 L1082.99,678.74 L1083.45,676.72 L1084.09,674.83 L1084.97,673.06 L1086.07,671.41 L1087.39,669.87 L1088.90,668.41 L1090.56,667.01 L1092.30,665.64 L1094.06,664.26 L1095.77,662.83 L1097.36,661.33 L1098.77,659.73 L1099.94,658.02 L1100.86,656.20 L1101.50,654.27 L1101.87,652.23 L1102.01,650.11 L1101.94,647.93 L1101.75,645.71 L1101.48,643.48 L1101.22,641.28 L1101.04,639.12 L1101.00,637.02 L1101.15,634.99 L1101.54,633.05 L1102.17,631.18 L1103.05,629.38 L1104.16,627.64 L1105.44,625.93 L1106.85,624.24 L1108.30,622.55 L1109.74,620.84 L1111.08,619.08 L1112.25,617.27 L1113.20,615.40 L1113.89,613.47 L1114.28,611.47 L1114.39,609.42 L1114.23,607.33 L1113.84,605.21 L1113.27,603.08 L1112.60,600.94 L1111.90,598.82 L1111.25,596.72 L1110.72,594.65 L1110.37,592.62 L1110.24,590.62 L1110.37,588.65 L1110.76,586.71 L1111.39,584.78 L1112.23,582.85 L1113.23,580.93 L1114.31,578.99 L1115.41,577.04 L1116.44,575.06 L1117.33,573.07 L1118.02,571.06 L1118.45,569.03Z" fill="#b21b26"/><path d="M640.50 567.00L1130.50 567.00" stroke="#f4dc9f" stroke-width="10"/><path d="M712.26 740.24L1058.74 393.76" stroke="#f4dc9f" stroke-width="10"/><path d="M885.50 812.00L885.50 322.00" stroke="#f4dc9f" stroke-width="10"/><path d="M1058.74 740.24L712.26 393.76" stroke="#f4dc9f" stroke-width="10"/><path d="M885.5 323L1097 445L885 811L674 689Z" fill="none" stroke="#5ee85e" stroke-width="1"/><path d="M885.5 323L885.5 811" stroke="#5ee85e" stroke-width="1"/><rect x="883.0" y="320.5" width="5" height="5" fill="#e8ffe8" stroke="#5ee85e" stroke-width="1"/><rect x="1094.5" y="442.5" width="5" height="5" fill="#e8ffe8" stroke="#5ee85e" stroke-width="1"/><rect x="882.5" y="808.5" width="5" height="5" fill="#e8ffe8" stroke="#5ee85e" stroke-width="1"/><rect x="671.5" y="686.5" width="5" height="5" fill="#e8ffe8" stroke="#5ee85e" stroke-width="1"/><rect x="988.8" y="381.5" width="5" height="5" fill="#c8f8c8" stroke="#5ee85e" stroke-width="1"/><rect x="988.5" y="625.5" width="5" height="5" fill="#c8f8c8" stroke="#5ee85e" stroke-width="1"/><rect x="777.0" y="747.5" width="5" height="5" fill="#c8f8c8" stroke="#5ee85e" stroke-width="1"/><rect x="777.2" y="503.5" width="5" height="5" fill="#c8f8c8" stroke="#5ee85e" stroke-width="1"/></g></svg>
<div style="left:0px;top:0px;width:1920px;height:30px;background:#4a4a4a;"></div>
<div style="left:0px;top:30px;width:1920px;height:1px;background:#2c2c2c;"></div>
<div class="t" style="left:8px;top:1px;font-size:24px;color:#c59a78;font-weight:bold;letter-spacing:-1px;line-height:26px;transform:scale(0.9,1);transform-origin:0 0;">Ai</div>
<div class="t" style="left:47px;top:8px;font-size:12px;color:#dcdcdc;font-weight:normal;line-height:15px;">Datei</div>
<div class="t" style="left:92px;top:8px;font-size:12px;color:#dcdcdc;font-weight:normal;line-height:15px;">Bearbeiten</div>
<div class="t" style="left:167px;top:8px;font-size:12px;color:#dcdcdc;font-weight:normal;line-height:15px;">Objekt</div>
<div class="t" style="left:220px;top:8px;font-size:12px;color:#dcdcdc;font-weight:normal;line-height:15px;">Schrift</div>
<div class="t" style="left:271px;top:8px;font-size:12px;color:#dcdcdc;font-weight:normal;line-height:15px;">Auswahl</div>
<div class="t" style="left:333px;top:8px;font-size:12px;color:#dcdcdc;font-weight:normal;line-height:15px;">Effekt</div>
<div class="t" style="left:380px;top:8px;font-size:12px;color:#dcdcdc;font-weight:normal;line-height:15px;">Ansicht</div>
<div class="t" style="left:437px;top:8px;font-size:12px;color:#dcdcdc;font-weight:normal;line-height:15px;">Fenster</div>
<div class="t" style="left:493px;top:8px;font-size:12px;color:#dcdcdc;font-weight:normal;line-height:15px;">Hilfe</div>
<div style="left:532px;top:5px;width:1px;height:22px;background:#3a3a3a;"></div>
<div style="left:548px;top:7px;width:14px;height:14px;border:1px solid #b8b8b8;background:#2a2a2a;"><div class="t" style="left:1px;top:1px;font-size:10px;color:#d0d0d0;font-weight:bold;line-height:12px;">Br</div></div>
<div style="left:587px;top:8px;width:16px;height:13px;border:1px solid #c8c8c8;background:#555;"><div style="position:absolute;left:1px;top:1px;width:7px;height:11px;background:#d0d0d0"></div><div style="position:absolute;left:9px;top:1px;width:6px;height:5px;background:#d0d0d0"></div><div style="position:absolute;left:9px;top:7px;width:6px;height:5px;background:#d0d0d0"></div></div>
<svg style="position:absolute;left:606px;top:12px" width="8" height="6"><path d="M0 0H8L4 5Z" fill="#d0d0d0"/></svg>
<div style="left:1566px;top:6px;width:1px;height:20px;background:#3a3a3a;"></div>
<div class="t" style="left:1578px;top:7px;font-size:12px;color:#d0d0d0;font-weight:normal;line-height:15px;">Grundlagen</div>
<svg style="position:absolute;left:1650px;top:13px" width="6" height="4"><path d="M0 0H6L3 4Z" fill="#d0d0d0"/></svg>
<div style="left:1669px;top:6px;width:1px;height:20px;background:#3a3a3a;"></div>
<div style="left:1680px;top:6px;width:124px;height:17px;background:#a5a5a5;border-top:1px solid #707070;box-sizing:border-box;"></div>
<svg style="position:absolute;left:1681px;top:7px" width="14" height="14"><circle cx="8" cy="6" r="4" fill="none" stroke="#333" stroke-width="1.3"/><path d="M5 9L1.5 12.5" stroke="#333" stroke-width="1.5"/></svg>
<div style="left:1814px;top:0px;width:103px;height:18px;background:#3c3c3c;border:1px solid #252525;border-top:none;border-radius:0 0 4px 4px;box-sizing:border-box;"></div>
<div style="left:1842px;top:0px;width:1px;height:18px;background:#252525;"></div>
<div style="left:1869px;top:0px;width:1px;height:18px;background:#252525;"></div>
<div style="left:1823px;top:10px;width:10px;height:3px;background:#e8e8e8;"></div>
<svg style="position:absolute;left:1850px;top:3px" width="13" height="11"><rect x="4" y="1" width="8" height="6" fill="none" stroke="#e8e8e8" stroke-width="2"/><rect x="1" y="4" width="8" height="6" fill="#3c3c3c" stroke="#e8e8e8" stroke-width="2"/></svg>
<svg style="position:absolute;left:1887px;top:3px" width="12" height="11"><path d="M1.5 1.5L10.5 9.5M10.5 1.5L1.5 9.5" stroke="#eaeaea" stroke-width="2.6"/></svg>
<div style="left:0px;top:31px;width:1920px;height:33px;background:#4c4c4c;border-top:1px solid #585858;"></div>
<div style="left:0px;top:63px;width:1920px;height:1px;background:#2b2b2b;"></div>
<svg style="position:absolute;left:5px;top:38px" width="4" height="19"><rect x="0" y="0" width="3" height="1" fill="#1e1e1e"/><rect x="0" y="2" width="3" height="1" fill="#1e1e1e"/><rect x="0" y="4" width="3" height="1" fill="#1e1e1e"/><rect x="0" y="6" width="3" height="1" fill="#1e1e1e"/><rect x="0" y="8" width="3" height="1" fill="#1e1e1e"/><rect x="0" y="10" width="3" height="1" fill="#1e1e1e"/><rect x="0" y="12" width="3" height="1" fill="#1e1e1e"/><rect x="0" y="14" width="3" height="1" fill="#1e1e1e"/><rect x="0" y="16" width="3" height="1" fill="#1e1e1e"/><rect x="0" y="18" width="3" height="1" fill="#1e1e1e"/></svg>
<div class="t" style="left:15px;top:41px;font-size:9.5px;color:#d4d4d4;font-weight:normal;line-height:12px;">Pfad</div>
<div style="left:90px;top:36px;width:1px;height:24px;background:#444;"></div>
<div style="left:98px;top:39px;width:17px;height:17px;background:#fff;border:1px solid #333;box-sizing:border-box;"><svg style="position:absolute;left:0;top:0" width="15" height="15"><path d="M1 14L14 1" stroke="#e01010" stroke-width="2"/></svg></div>
<div style="left:115px;top:39px;width:15px;height:17px;background:#474747;border:1px solid #393939;box-sizing:border-box;"><svg style="position:absolute;left:3px;top:5px" width="8" height="6"><path d="M0 0.5H8L4 5.5Z" fill="#d8d8d8"/></svg></div>
<div style="left:139px;top:39px;width:17px;height:17px;background:#f2dd9e;border:1px solid #333;box-sizing:border-box;"><svg style="position:absolute;left:0;top:0" width="15" height="15"><rect x="3" y="3" width="6" height="6" fill="#fff" stroke="#111" stroke-width="1.3"/><path d="M6 14L14 5" stroke="#111" stroke-width="1"/><rect x="11" y="11" width="2" height="2" fill="#111"/></svg></div>
<div style="left:156px;top:39px;width:15px;height:17px;background:#474747;border:1px solid #393939;box-sizing:border-box;"><svg style="position:absolute;left:3px;top:5px" width="8" height="6"><path d="M0 0.5H8L4 5.5Z" fill="#d8d8d8"/></svg></div>
<div class="t" style="left:185px;top:40px;font-size:10.5px;color:#e0902e;font-weight:normal;line-height:13.5px;border-bottom:1px dotted #c98a3a;">Kontur:</div>
<div style="left:226px;top:39px;width:17px;height:17px;background:#474747;border:1px solid #393939;box-sizing:border-box;"><svg style="position:absolute;left:0;top:0" width="17" height="17"><path d="M4.5 6.5H12.5L8.5 2.5Z" fill="#d8d8d8"/><path d="M4.5 10.5H12.5L8.5 14.5Z" fill="#d8d8d8"/><path d="M1 8.5H16" stroke="#333" stroke-width="1"/></svg></div>
<div style="left:243px;top:39px;width:47px;height:17px;background:#acacac;border-top:1px solid #7a7a7a;box-sizing:border-box;"><div class="t" style="left:3px;top:1.2px;font-size:11px;color:#1a1a1a;line-height:12.6px">1 px</div></div>
<div style="left:290px;top:39px;width:15px;height:17px;background:#474747;border:1px solid #393939;box-sizing:border-box;"><svg style="position:absolute;left:3px;top:5px" width="8" height="6"><path d="M0 0.5H8L4 5.5Z" fill="#d8d8d8"/></svg></div>
<div style="left:313px;top:39px;width:91px;height:16px;background:#e8e8e8;border:1px solid #3a3a3a;box-sizing:border-box;"><div style="position:absolute;left:5px;top:6px;width:33px;height:2px;background:#111"></div><div class="t" style="left:44px;top:1px;font-size:10px;color:#111;line-height:13px">Gleichm.</div></div>
<div style="left:404px;top:39px;width:15px;height:17px;background:#474747;border:1px solid #393939;box-sizing:border-box;"><svg style="position:absolute;left:3px;top:5px" width="8" height="6"><path d="M0 0.5H8L4 5.5Z" fill="#d8d8d8"/></svg></div>
<div style="left:428px;top:39px;width:87px;height:17px;background:#e8e8e8;border:1px solid #3a3a3a;box-sizing:border-box;"><div style="position:absolute;left:6px;top:7px;width:34px;height:2px;background:#111"></div><div class="t" style="left:45px;top:2px;font-size:10px;color:#111;line-height:13px">Einfach</div></div>
<div style="left:515px;top:39px;width:15px;height:17px;background:#474747;border:1px solid #393939;box-sizing:border-box;"><svg style="position:absolute;left:3px;top:5px" width="8" height="6"><path d="M0 0.5H8L4 5.5Z" fill="#d8d8d8"/></svg></div>
<div class="t" style="left:539px;top:40px;font-size:10px;color:#e0902e;font-weight:normal;line-height:13px;border-bottom:1px dotted #c98a3a;">Deckkraft:</div>
<div style="left:593px;top:39px;width:51px;height:17px;background:#acacac;border-top:1px solid #7a7a7a;box-sizing:border-box;"><div class="t" style="left:3px;top:1.8px;font-size:10px;color:#1a1a1a;line-height:11.5px">100%</div></div>
<div style="left:644px;top:39px;width:15px;height:17px;background:#474747;border:1px solid #393939;box-sizing:border-box;"><svg style="position:absolute;left:4px;top:4px" width="7" height="9"><path d="M1 0.5V8.5L6 4.5Z" fill="#d8d8d8"/></svg></div>
<div class="t" style="left:666px;top:40px;font-size:10px;color:#d4d4d4;font-weight:normal;line-height:13px;">Stil:</div>
<div style="left:692px;top:39px;width:17px;height:17px;background:#ebebeb;border:1px solid #333;box-sizing:border-box;"></div>
<div style="left:709px;top:39px;width:15px;height:17px;background:#474747;border:1px solid #393939;box-sizing:border-box;"><svg style="position:absolute;left:3px;top:5px" width="8" height="6"><path d="M0 0.5H8L4 5.5Z" fill="#d8d8d8"/></svg></div>
<div style="left:731px;top:36px;width:1px;height:24px;background:#444;"></div>
<svg style="position:absolute;left:743px;top:39px" width="16" height="16"><defs><radialGradient id="gl" cx="0.4" cy="0.35"><stop offset="0" stop-color="#eee"/><stop offset="1" stop-color="#777"/></radialGradient></defs><circle cx="8" cy="8" r="7" fill="url(#gl)" stroke="#666"/><path d="M8 1V15M1 8H15M3 3L13 13M13 3L3 13" stroke="#555" stroke-width="0.6"/><circle cx="8" cy="8" r="1.5" fill="#333"/></svg>
<div style="left:769px;top:36px;width:1px;height:24px;background:#444;"></div>
<svg style="position:absolute;left:782px;top:40px" width="26" height="15"><rect x="1.5" y="1.5" width="13" height="12" fill="none" stroke="#cfcfcf" stroke-dasharray="2 1"/><path d="M8 4L6 6H10ZM8 11L6 9H10ZM4.5 7.5L6.5 5.5V9.5ZM11.5 7.5L9.5 5.5V9.5Z" fill="#c8c8c8"/><path d="M17 5H25L21 9Z" fill="#d8d8d8"/></svg>
<div style="left:818px;top:36px;width:1px;height:24px;background:#444;"></div>
<svg style="position:absolute;left:825px;top:38px" width="19" height="19"><rect x="0.5" y="0.5" width="4" height="4" fill="none" stroke="#d8d8d8" stroke-width="1.2"/><rect x="7.5" y="0.5" width="4" height="4" fill="none" stroke="#d8d8d8" stroke-width="1.2"/><rect x="14.5" y="0.5" width="4" height="4" fill="none" stroke="#d8d8d8" stroke-width="1.2"/><rect x="0.5" y="7.5" width="4" height="4" fill="none" stroke="#d8d8d8" stroke-width="1.2"/><rect x="7.0" y="7.0" width="5" height="5" fill="#d8d8d8"/><rect x="14.5" y="7.5" width="4" height="4" fill="none" stroke="#d8d8d8" stroke-width="1.2"/><rect x="0.5" y="14.5" width="4" height="4" fill="none" stroke="#d8d8d8" stroke-width="1.2"/><rect x="7.5" y="14.5" width="4" height="4" fill="none" stroke="#d8d8d8" stroke-width="1.2"/><rect x="14.5" y="14.5" width="4" height="4" fill="none" stroke="#d8d8d8" stroke-width="1.2"/><path d="M5 2.5H7.0M12.0 2.5H14.0M5 16.5H7.0M12.0 16.5H14.0M2.5 5V7.0M2.5 12.0V14.0M16.5 5V7.0M16.5 12.0V14.0" stroke="#d8d8d8" stroke-width="1.2"/></svg>
<div class="t" style="left:854px;top:40px;font-size:10.5px;color:#e0902e;font-weight:normal;line-height:13.5px;border-bottom:1px dotted #c98a3a;">x:</div>
<div style="left:870px;top:39px;width:17px;height:17px;background:#474747;border:1px solid #393939;box-sizing:border-box;"><svg style="position:absolute;left:0;top:0" width="17" height="17"><path d="M4.5 6.5H12.5L8.5 2.5Z" fill="#d8d8d8"/><path d="M4.5 10.5H12.5L8.5 14.5Z" fill="#d8d8d8"/><path d="M1 8.5H16" stroke="#333" stroke-width="1"/></svg></div>
<div style="left:887px;top:39px;width:57px;height:17px;background:#acacac;border-top:1px solid #7a7a7a;box-sizing:border-box;"><div class="t" style="left:3px;top:2.0px;font-size:9.5px;color:#1a1a1a;line-height:10.9px">181,75 mm</div></div>
<div class="t" style="left:952px;top:40px;font-size:10.5px;color:#e0902e;font-weight:normal;line-height:13.5px;border-bottom:1px dotted #c98a3a;">y:</div>
<div style="left:969px;top:39px;width:17px;height:17px;background:#474747;border:1px solid #393939;box-sizing:border-box;"><svg style="position:absolute;left:0;top:0" width="17" height="17"><path d="M4.5 6.5H12.5L8.5 2.5Z" fill="#d8d8d8"/><path d="M4.5 10.5H12.5L8.5 14.5Z" fill="#d8d8d8"/><path d="M1 8.5H16" stroke="#333" stroke-width="1"/></svg></div>
<div style="left:986px;top:39px;width:57px;height:17px;background:#acacac;border-top:1px solid #7a7a7a;box-sizing:border-box;"><div class="t" style="left:3px;top:2.0px;font-size:9.5px;color:#1a1a1a;line-height:10.9px">50,067 mm</div></div>
<div class="t" style="left:1052px;top:39px;font-size:10.5px;color:#e0902e;font-weight:normal;line-height:13.5px;border-bottom:1px dotted #c98a3a;">B:</div>
<div style="left:1069px;top:38px;width:17px;height:17px;background:#474747;border:1px solid #393939;box-sizing:border-box;"><svg style="position:absolute;left:0;top:0" width="17" height="17"><path d="M4.5 6.5H12.5L8.5 2.5Z" fill="#d8d8d8"/><path d="M4.5 10.5H12.5L8.5 14.5Z" fill="#d8d8d8"/><path d="M1 8.5H16" stroke="#333" stroke-width="1"/></svg></div>
<div style="left:1086px;top:38px;width:57px;height:17px;background:#acacac;border-top:1px solid #7a7a7a;box-sizing:border-box;"><div class="t" style="left:3px;top:2.0px;font-size:9.5px;color:#1a1a1a;line-height:10.9px">0,033 mm</div></div>
<div style="left:1152px;top:36px;width:20px;height:21px;background:#2f2f2f;border-radius:2px;"><svg style="position:absolute;left:3px;top:5px" width="14" height="10"><rect x="1" y="1.5" width="7" height="6" rx="3" fill="none" stroke="#e0e0e0" stroke-width="1.6"/><rect x="6" y="1.5" width="7" height="6" rx="3" fill="none" stroke="#e0e0e0" stroke-width="1.6"/></svg></div>
<div class="t" style="left:1181px;top:39px;font-size:10.5px;color:#e0902e;font-weight:normal;line-height:13.5px;border-bottom:1px dotted #c98a3a;">H:</div>
<div style="left:1200px;top:38px;width:16px;height:17px;background:#474747;border:1px solid #393939;box-sizing:border-box;"><svg style="position:absolute;left:0;top:0" width="16" height="17"><path d="M4.0 6.5H12.0L8.0 2.5Z" fill="#d8d8d8"/><path d="M4.0 10.5H12.0L8.0 14.5Z" fill="#d8d8d8"/><path d="M1 8.5H15" stroke="#333" stroke-width="1"/></svg></div>
<div style="left:1216px;top:38px;width:57px;height:17px;background:#acacac;border-top:1px solid #7a7a7a;box-sizing:border-box;"><div class="t" style="left:3px;top:2.0px;font-size:9.5px;color:#1a1a1a;line-height:10.9px">18,105 mm</div></div>
<div style="left:1282px;top:36px;width:1px;height:24px;background:#444;"></div>
<svg style="position:absolute;left:1292px;top:39px" width="16" height="15"><rect x="4" y="4" width="8" height="7" fill="#9a9a9a" stroke="#d8d8d8"/><path d="M1 1L4 4M15 1L12 4M1 14L4 11M15 14L12 11" stroke="#d8d8d8"/></svg>
<svg style="position:absolute;left:1322px;top:38px" width="34" height="17"><rect x="1" y="5" width="6" height="6" fill="#999" stroke="#ccc"/><rect x="10" y="2" width="6" height="6" fill="#999" stroke="#ccc"/><path d="M7 6L15 14L12 10L10 13Z" fill="#ddd"/><path d="M23 5H31L27 10Z" fill="#d8d8d8"/></svg>
<svg style="position:absolute;left:1888px;top:43px" width="16" height="10"><path d="M0 3H4L2 5Z" fill="#ccc"/><path d="M6 1H14M6 4H14M6 7H14" stroke="#ccc"/></svg>
<div style="left:0px;top:64px;width:72px;height:14px;background:#2e2e2e;"></div>
<svg style="position:absolute;left:5px;top:67px" width="8" height="7"><path d="M3.5 0.5V6.5L0.5 3.5ZM7.5 0.5V6.5L4.5 3.5Z" fill="#cfcfcf"/></svg>
<div style="left:1px;top:78px;width:70px;height:961px;background:#535353;border-left:1px solid #474747;border-top:1px solid #464646;"></div>
<svg style="position:absolute;left:26px;top:81px" width="19" height="4"><rect x="0" y="0" width="1" height="4" fill="#1a1a1a"/><rect x="2" y="0" width="1" height="4" fill="#1a1a1a"/><rect x="4" y="0" width="1" height="4" fill="#1a1a1a"/><rect x="6" y="0" width="1" height="4" fill="#1a1a1a"/><rect x="8" y="0" width="1" height="4" fill="#1a1a1a"/><rect x="10" y="0" width="1" height="4" fill="#1a1a1a"/><rect x="12" y="0" width="1" height="4" fill="#1a1a1a"/><rect x="14" y="0" width="1" height="4" fill="#1a1a1a"/><rect x="16" y="0" width="1" height="4" fill="#1a1a1a"/><rect x="18" y="0" width="1" height="4" fill="#1a1a1a"/></svg>
<div style="left:7px;top:94px;width:28px;height:22px;background:#363636;border:1px solid #2e2e2e;"></div>
<div style="left:5px;top:142px;width:62px;height:1px;background:#3e3e3e;"></div>
<div style="left:5px;top:143px;width:62px;height:1px;background:#5c5c5c;"></div>
<div style="left:5px;top:239px;width:62px;height:1px;background:#3e3e3e;"></div>
<div style="left:5px;top:240px;width:62px;height:1px;background:#5c5c5c;"></div>
<div style="left:5px;top:314px;width:62px;height:1px;background:#3e3e3e;"></div>
<div style="left:5px;top:315px;width:62px;height:1px;background:#5c5c5c;"></div>
<div style="left:5px;top:364px;width:62px;height:1px;background:#3e3e3e;"></div>
<div style="left:5px;top:365px;width:62px;height:1px;background:#5c5c5c;"></div>
<div style="left:5px;top:390px;width:62px;height:1px;background:#3e3e3e;"></div>
<div style="left:5px;top:391px;width:62px;height:1px;background:#5c5c5c;"></div>
<div style="left:5px;top:439px;width:62px;height:1px;background:#3e3e3e;"></div>
<div style="left:5px;top:440px;width:62px;height:1px;background:#5c5c5c;"></div>
<svg style="position:absolute;left:11.5px;top:96.0px" width="18" height="18" viewBox="0 0 18 18"><path d="M5 1.5V14.5L8 11.5L10.5 16.5L12.5 15.5L10 10.5H14Z" fill="#2e2e2e" stroke="#cfcfcf" stroke-width="1.2" stroke-linejoin="round"/></svg>
<svg style="position:absolute;left:42.0px;top:96.0px" width="18" height="18" viewBox="0 0 18 18"><path d="M4 1.5V14L7.5 10.5L10 15.5L12 14.5L9.5 9.5H13.5Z" fill="#9a9a9a" stroke="#cfcfcf" stroke-width="0.6"/></svg><svg style="position:absolute;left:61.0px;top:111.0px" width="4" height="4"><path d="M4 0V4H0Z" fill="#e8e8e8"/></svg>
<svg style="position:absolute;left:11.5px;top:120.0px" width="18" height="18" viewBox="0 0 18 18"><path d="M8 8L15 16" stroke="#cfcfcf" stroke-width="2.2"/><path d="M6 1V11M1 6H11M2.5 2.5L9.5 9.5M9.5 2.5L2.5 9.5" stroke="#cfcfcf" stroke-width="1.2"/><circle cx="6" cy="6" r="2" fill="#eee"/></svg>
<svg style="position:absolute;left:42.0px;top:120.0px" width="18" height="18" viewBox="0 0 18 18"><ellipse cx="8" cy="6" rx="6.5" ry="4" fill="none" stroke="#cfcfcf" stroke-width="1.3"/><path d="M3 9C2 12 5 13 4 15" stroke="#cfcfcf" fill="none" stroke-width="1.2"/><path d="M9 4V16L12 13L16 12Z" fill="#9a9a9a" stroke="#cfcfcf" stroke-width="0.6"/></svg>
<svg style="position:absolute;left:11.5px;top:145.0px" width="18" height="18" viewBox="0 0 18 18"><path d="M12 1L18 6.5L15.8 8.7L9.8 3.2Z" fill="#c8c8c8" stroke="#2e2e2e" stroke-width="0.5"/><path d="M9.8 3.5L15.5 8.7L12.5 14L1.8 17.4L4.8 7Z" fill="#b8b8b8" stroke="#e0e0e0" stroke-width="0.7"/><path d="M1.8 17.4L8.4 10.9" stroke="#333" stroke-width="0.7"/><circle cx="8.4" cy="10.9" r="1.2" fill="#1e1e1e"/></svg><svg style="position:absolute;left:30.5px;top:160.0px" width="4" height="4"><path d="M4 0V4H0Z" fill="#e8e8e8"/></svg>
<svg style="position:absolute;left:42.0px;top:145.0px" width="18" height="18" viewBox="0 0 18 18"><path d="M3.2 2.8H15.2V5.8M3.2 2.8V5.8M9.2 2.8V16M6 16.2H12.4" stroke="#cfcfcf" stroke-width="1.7" fill="none"/></svg><svg style="position:absolute;left:61.0px;top:160.0px" width="4" height="4"><path d="M4 0V4H0Z" fill="#e8e8e8"/></svg>
<svg style="position:absolute;left:11.5px;top:169.7px" width="18" height="18" viewBox="0 0 18 18"><path d="M2 16L15 3" stroke="#cfcfcf" stroke-width="1.3"/></svg><svg style="position:absolute;left:30.5px;top:184.7px" width="4" height="4"><path d="M4 0V4H0Z" fill="#e8e8e8"/></svg>
<svg style="position:absolute;left:42.0px;top:169.7px" width="18" height="18" viewBox="0 0 18 18"><ellipse cx="9" cy="9" rx="7.5" ry="5.5" fill="#6e6e6e" stroke="#cfcfcf" stroke-width="1"/></svg><svg style="position:absolute;left:61.0px;top:184.7px" width="4" height="4"><path d="M4 0V4H0Z" fill="#e8e8e8"/></svg>
<svg style="position:absolute;left:11.5px;top:194.0px" width="18" height="18" viewBox="0 0 18 18"><path d="M17.5 1.5L9.5 10.5" stroke="#9a9a9a" stroke-width="2.6" stroke-linecap="round"/><path d="M17.5 1.5L13 6.5" stroke="#cfcfcf" stroke-width="1.2" stroke-linecap="round"/><path d="M9.5 9.5L11.8 12C9 16 5 16.8 0.5 15.5C4 14.5 6 11.5 9.5 9.5Z" fill="#cfcfcf"/></svg><svg style="position:absolute;left:30.5px;top:209.0px" width="4" height="4"><path d="M4 0V4H0Z" fill="#e8e8e8"/></svg>
<svg style="position:absolute;left:42.0px;top:194.0px" width="18" height="18" viewBox="0 0 18 18"><path d="M12.5 1.5L16.5 5.5L6.5 15.5L2.5 11.5Z" fill="#9a9a9a" stroke="#2e2e2e" stroke-width="0.6"/><path d="M12.8 1.2C14 0 17.8 3.8 16.6 5L14.8 6.8L11 3Z" fill="#dcdcdc"/><path d="M11 3L14.8 6.8" stroke="#333" stroke-width="1"/><path d="M2.5 11.5L6.5 15.5L0.8 17.2Z" fill="#d0d0d0"/></svg><svg style="position:absolute;left:61.0px;top:209.0px" width="4" height="4"><path d="M4 0V4H0Z" fill="#e8e8e8"/></svg>
<svg style="position:absolute;left:11.5px;top:218.0px" width="18" height="18" viewBox="0 0 18 18"><path d="M1.5 6H9L14 10V15.5H1.5Z" fill="#9a9a9a" stroke="#cfcfcf" stroke-width="1"/><path d="M6 11C8 8 11 5 16 1.5" stroke="#cfcfcf" stroke-width="2.2"/><path d="M5 11.5C6 9 8 8.5 9 9.5C9 11 7 12 5 11.5Z" fill="#333"/></svg><svg style="position:absolute;left:30.5px;top:233.0px" width="4" height="4"><path d="M4 0V4H0Z" fill="#e8e8e8"/></svg>
<svg style="position:absolute;left:42.0px;top:218.0px" width="18" height="18" viewBox="0 0 18 18"><path d="M2 11L9 3.5H16.5L16.5 6L10 13.5H2Z" fill="#9a9a9a" stroke="#cfcfcf" stroke-width="1"/><path d="M2 11H10L16.5 3.5M10 11V13.5" stroke="#cfcfcf" stroke-width="1" fill="none"/></svg><svg style="position:absolute;left:61.0px;top:233.0px" width="4" height="4"><path d="M4 0V4H0Z" fill="#e8e8e8"/></svg>
<svg style="position:absolute;left:11.5px;top:243.7px" width="18" height="18" viewBox="0 0 18 18"><circle cx="9" cy="10" r="6" fill="none" stroke="#cfcfcf" stroke-width="1.6" stroke-dasharray="2 1.6"/><path d="M4 2L8 4.5L3.5 7Z" fill="#cfcfcf"/></svg><svg style="position:absolute;left:30.5px;top:258.7px" width="4" height="4"><path d="M4 0V4H0Z" fill="#e8e8e8"/></svg>
<svg style="position:absolute;left:42.0px;top:243.7px" width="18" height="18" viewBox="0 0 18 18"><rect x="1.5" y="8" width="8" height="8" fill="none" stroke="#cfcfcf" stroke-width="1"/><rect x="5" y="2" width="11.5" height="10" fill="none" stroke="#cfcfcf" stroke-width="1"/><path d="M9 8L14 3.5M11.5 3.5H14V6" stroke="#cfcfcf" stroke-width="1" fill="none"/></svg><svg style="position:absolute;left:61.0px;top:258.7px" width="4" height="4"><path d="M4 0V4H0Z" fill="#e8e8e8"/></svg>
<svg style="position:absolute;left:11.5px;top:267.0px" width="18" height="18" viewBox="0 0 18 18"><path d="M3 4C6 2 6 7 9 9C12 11 14 7 17 10C17 14 12 15 8 13C5 11 4 8 3 4Z" fill="#9a9a9a"/><path d="M2 16L11 4" stroke="#cfcfcf" stroke-width="1"/><circle cx="6" cy="11" r="2" fill="none" stroke="#eee" stroke-width="1.3"/><circle cx="11" cy="4" r="1.3" fill="none" stroke="#eee"/><circle cx="2" cy="16" r="1.3" fill="none" stroke="#eee"/></svg><svg style="position:absolute;left:30.5px;top:282.0px" width="4" height="4"><path d="M4 0V4H0Z" fill="#e8e8e8"/></svg>
<svg style="position:absolute;left:42.0px;top:267.0px" width="18" height="18" viewBox="0 0 18 18"><rect x="5.5" y="4.5" width="11" height="10" fill="none" stroke="#cfcfcf" stroke-width="1" stroke-dasharray="1.5 1.5"/><path d="M2 1.5V13L5 10L10 11Z" fill="#9a9a9a" stroke="#cfcfcf" stroke-width="0.6"/></svg>
<svg style="position:absolute;left:11.5px;top:291.0px" width="18" height="18" viewBox="0 0 18 18"><circle cx="6" cy="8" r="5" fill="#6e6e6e" stroke="#cfcfcf" stroke-width="0.8"/><circle cx="11" cy="6" r="5" fill="#6e6e6e" stroke="#cfcfcf" stroke-width="0.8"/><path d="M2 8H11" stroke="#eee" stroke-dasharray="1 1"/><path d="M10 8V18L13 15L17 14.5Z" fill="#9a9a9a" stroke="#cfcfcf" stroke-width="0.6"/></svg><svg style="position:absolute;left:30.5px;top:306.0px" width="4" height="4"><path d="M4 0V4H0Z" fill="#e8e8e8"/></svg>
<svg style="position:absolute;left:42.0px;top:291.0px" width="18" height="18" viewBox="0 0 18 18"><path d="M2 1.5V16.5H17V13H10V5.5Z" fill="#9a9a9a" stroke="#cfcfcf" stroke-width="1"/><path d="M5.5 3V16M2 9H10M2 12.5H17M10 5.5V16.5" stroke="#cfcfcf" stroke-width="0.8"/></svg><svg style="position:absolute;left:61.0px;top:306.0px" width="4" height="4"><path d="M4 0V4H0Z" fill="#e8e8e8"/></svg>
<svg style="position:absolute;left:11.5px;top:318.0px" width="18" height="18" viewBox="0 0 18 18"><rect x="1.5" y="3" width="15" height="12" fill="#555" stroke="#cfcfcf" stroke-width="1"/><path d="M2 10C6 8 7 5 9 3M6 15C7 11 11 9 16 8M10 15C11 13 13 12 16 12M2 6C4 6 5 8 6 9" stroke="#cfcfcf" stroke-width="0.9" fill="none"/></svg>
<svg style="position:absolute;left:42.0px;top:318.0px" width="18" height="18" viewBox="0 0 18 18"><defs><linearGradient id="tg" x1="0" x2="1"><stop offset="0" stop-color="#3a3a3a"/><stop offset="1" stop-color="#e0e0e0"/></linearGradient></defs><rect x="1.5" y="3" width="15" height="12" fill="url(#tg)" stroke="#cfcfcf" stroke-width="1"/></svg>
<svg style="position:absolute;left:11.5px;top:342.0px" width="18" height="18" viewBox="0 0 18 18"><path d="M2.5 16L3.2 13.2L10 6.5L12 8.5L5.2 15.2Z" fill="#555" stroke="#cfcfcf" stroke-width="1"/><path d="M8.8 5.5L13 9.7" stroke="#cfcfcf" stroke-width="2.2"/><path d="M11.3 4.8L13.8 2.2C14.8 1.2 17.3 3.7 16.3 4.7L13.7 7.2Z" fill="#cfcfcf"/></svg><svg style="position:absolute;left:30.5px;top:357.0px" width="4" height="4"><path d="M4 0V4H0Z" fill="#e8e8e8"/></svg>
<svg style="position:absolute;left:42.0px;top:342.0px" width="18" height="18" viewBox="0 0 18 18"><rect x="0.5" y="1" width="8" height="8.5" fill="#c0c0c0"/><rect x="4.5" y="4" width="8.5" height="8.5" rx="1.5" fill="#808080" stroke="#c8c8c8" stroke-width="0.6"/><circle cx="13.3" cy="11.6" r="4.4" fill="#666" stroke="#cfcfcf" stroke-width="1.2"/></svg>
<svg style="position:absolute;left:11.5px;top:368.0px" width="18" height="18" viewBox="0 0 18 18"><rect x="8" y="4.5" width="9" height="12.5" fill="#5a5a5a" stroke="#cfcfcf" stroke-width="1.1"/><circle cx="12.5" cy="10.8" r="2.4" fill="none" stroke="#cfcfcf" stroke-width="1.5"/><rect x="10.5" y="1" width="4" height="3.5" fill="#cfcfcf"/><circle cx="1.0" cy="1.2" r="0.6" fill="#ddd"/><circle cx="1.0" cy="4.8" r="0.6" fill="#ddd"/><circle cx="2.8" cy="3.0" r="0.6" fill="#ddd"/><circle cx="4.6" cy="1.2" r="0.6" fill="#ddd"/><circle cx="4.6" cy="4.8" r="0.6" fill="#ddd"/><circle cx="6.4" cy="3.0" r="0.6" fill="#ddd"/><circle cx="8.2" cy="1.2" r="0.6" fill="#ddd"/><circle cx="8.2" cy="4.8" r="0.6" fill="#ddd"/></svg><svg style="position:absolute;left:30.5px;top:383.0px" width="4" height="4"><path d="M4 0V4H0Z" fill="#e8e8e8"/></svg>
<svg style="position:absolute;left:42.0px;top:368.0px" width="18" height="18" viewBox="0 0 18 18"><path d="M1.2 1.8V15.5H17.8" stroke="#cfcfcf" stroke-width="1.1" fill="none"/><rect x="4" y="8.6" width="2.6" height="6.4" fill="none" stroke="#cfcfcf" stroke-width="0.9"/><rect x="9" y="4" width="2.8" height="11" fill="#8a8a8a" stroke="#cfcfcf" stroke-width="0.6"/><rect x="14.2" y="6.2" width="2.8" height="8.8" fill="none" stroke="#cfcfcf" stroke-width="0.9"/></svg><svg style="position:absolute;left:61.0px;top:383.0px" width="4" height="4"><path d="M4 0V4H0Z" fill="#e8e8e8"/></svg>
<svg style="position:absolute;left:11.5px;top:394.0px" width="18" height="18" viewBox="0 0 18 18"><rect x="3.5" y="3.5" width="11.5" height="9" fill="#7a7a7a" stroke="#cfcfcf" stroke-width="1"/><path d="M-0.5 3.5H19M-0.5 12.5H19M4 0V17.5M14.5 0V17.5" stroke="#cfcfcf" stroke-width="1" fill="none"/></svg>
<svg style="position:absolute;left:42.0px;top:394.0px" width="18" height="18" viewBox="0 0 18 18"><path d="M0.8 15.8L11.5 8.5L13.5 10.5Z" fill="#d8d8d8"/><path d="M11 7.5L16 3H19L14.5 10.5Z" fill="#9a9a9a" stroke="#c8c8c8" stroke-width="0.5"/></svg><svg style="position:absolute;left:61.0px;top:409.0px" width="4" height="4"><path d="M4 0V4H0Z" fill="#e8e8e8"/></svg>
<svg style="position:absolute;left:11.5px;top:417.0px" width="18" height="18" viewBox="0 0 18 18"><path d="M5.5 18C3.5 16 1 12.5 1.2 11C1.8 10 3.4 10.8 4.6 12.4V4.2C4.6 3 6.6 3 6.6 4.2V9V2.8C6.6 1.6 8.6 1.6 8.6 2.8V9V2.6C8.6 1.4 10.6 1.4 10.6 2.6V9V3.8C10.6 2.6 12.6 2.6 12.6 3.8V10.5C13.4 9 14.6 8.5 15.6 9.2C14.8 12 13.8 15.5 12.2 18Z" fill="#b4b4b4" stroke="#d8d8d8" stroke-width="0.5"/></svg><svg style="position:absolute;left:30.5px;top:432.0px" width="4" height="4"><path d="M4 0V4H0Z" fill="#e8e8e8"/></svg>
<svg style="position:absolute;left:42.0px;top:417.0px" width="18" height="18" viewBox="0 0 18 18"><circle cx="6.8" cy="7.9" r="5.2" fill="#6a6a6a" stroke="#cfcfcf" stroke-width="1.6"/><path d="M10.8 11.8L16.8 16.6" stroke="#cfcfcf" stroke-width="2.8" stroke-linecap="round"/></svg>
<div style="left:24px;top:462px;width:35px;height:34px;background:#f2dd9e;border:1px solid #2e2e2e;"><div style="left:8px;top:8px;width:17px;height:16px;background:#535353;border:1px solid #3a3a3a;"></div></div>
<div style="left:6px;top:443px;width:36px;height:35px;background:#ffffff;border:1px solid #2e2e2e;"><svg style="position:absolute;left:0;top:0" width="34" height="33"><path d="M1 32L33 1" stroke="#e01818" stroke-width="2.2"/></svg></div>
<svg style="position:absolute;left:49px;top:444px" width="12" height="12"><path d="M2 3H8V9" stroke="#cfcfcf" stroke-width="1.2" fill="none"/><path d="M0 3L3 0.5V5.5ZM8 11.5L5.5 8.5H10.5Z" fill="#cfcfcf"/></svg>
<svg style="position:absolute;left:6px;top:485px" width="12" height="12"><rect x="4" y="4" width="7" height="7" fill="#222" stroke="#cfcfcf"/><rect x="1" y="1" width="7" height="7" fill="#fff" stroke="#222"/></svg>
<div style="left:7px;top:504px;width:60px;height:18px;background:#3f3f3f;"></div>
<div style="left:8px;top:505px;width:19px;height:16px;background:#4a4a4a;border:1px solid #3a3a3a;"><div style="left:3px;top:2px;width:12px;height:11px;background:#c8202a;border:1px solid #2a2a2a"></div></div>
<div style="left:28px;top:505px;width:19px;height:16px;background:#4a4a4a;border:1px solid #3a3a3a;"><div style="left:3px;top:2px;width:12px;height:11px;background:linear-gradient(#f3d9b0,#d8b890);border:1px solid #2a2a2a"></div></div>
<div style="left:48px;top:505px;width:19px;height:16px;background:#353535;border:1px solid #2a2a2a;"><div style="left:3px;top:2px;width:12px;height:11px;background:#fff;border:1px solid #2a2a2a"><svg style="position:absolute;left:0;top:0" width="10" height="9"><path d="M0 9L10 0" stroke="#e01818" stroke-width="1.8"/></svg></div></div>
<div style="left:7px;top:529px;width:60px;height:17px;background:#464646;border:1px solid #3a3a3a;"></div>
<div style="left:8px;top:530px;width:19px;height:15px;background:#353535;"></div>
<div style="left:47px;top:530px;width:1px;height:15px;background:#3a3a3a;"></div>
<div style="left:27px;top:530px;width:1px;height:15px;background:#3a3a3a;"></div>
<svg style="position:absolute;left:12px;top:532px" width="10" height="10"><circle cx="4.5" cy="4.5" r="3.5" fill="#888" stroke="#ccc"/><rect x="5" y="5" width="4.5" height="4.5" fill="#bbb"/></svg>
<svg style="position:absolute;left:32px;top:532px" width="10" height="10"><circle cx="4.5" cy="4.5" r="3.5" fill="#888" stroke="#ccc"/><rect x="4" y="4" width="5.5" height="5.5" fill="none" stroke="#ccc"/></svg>
<svg style="position:absolute;left:52px;top:532px" width="10" height="10"><circle cx="4.5" cy="4.5" r="3.5" fill="none" stroke="#ccc"/><rect x="5" y="5" width="4.5" height="4.5" fill="#888"/></svg>
<svg style="position:absolute;left:24px;top:555px" width="22" height="15"><rect x="1" y="4.5" width="13" height="9" fill="#888" stroke="#cfcfcf"/><rect x="8" y="1" width="13" height="9" fill="#999" stroke="#cfcfcf"/></svg>
<div style="left:117px;top:551px;width:232px;height:432px;background:#535353;border:1px solid #2a2a2a;border-radius:3px 3px 0 0;box-shadow:0 1px 3px rgba(0,0,0,0.35);"></div>
<div style="left:118px;top:552px;width:230px;height:13px;background:#2f2f2f;border-radius:3px 3px 0 0;"></div>
<div style="left:118px;top:565px;width:230px;height:17px;background:#3c3c3c;"></div>
<div style="left:118px;top:565px;width:70px;height:17px;background:#535353;"></div>
<svg style="position:absolute;left:122px;top:568px" width="6" height="11"><path d="M0.5 4.5L3 1.5L5.5 4.5M0.5 6.5L3 9.5L5.5 6.5" stroke="#d0d0d0" fill="none" stroke-width="1.1"/></svg>
<div class="t" style="left:131px;top:567px;font-size:10px;color:#e0e0e0;font-weight:bold;line-height:13px;">Ausrichten</div>
<div class="t" style="left:123px;top:588px;font-size:10px;color:#dadada;font-weight:normal;line-height:13px;">Objekte ausrichten:</div>
<svg style="position:absolute;left:128px;top:612px" width="14" height="15"><path d="M1.5 0V15" stroke="#d0d0d0"/><rect x="3" y="2" width="6" height="5" fill="#d0d0d0"/><rect x="3.5" y="8.5" width="9" height="5" fill="none" stroke="#d0d0d0"/></svg>
<svg style="position:absolute;left:164px;top:612px" width="14" height="15"><path d="M7 0V15" stroke="#d0d0d0"/><rect x="4" y="2" width="6" height="5" fill="#d0d0d0"/><rect x="1.5" y="8.5" width="11" height="5" fill="none" stroke="#d0d0d0"/></svg>
<svg style="position:absolute;left:201px;top:612px" width="14" height="15"><path d="M12.5 0V15" stroke="#d0d0d0"/><rect x="5" y="2" width="6" height="5" fill="#d0d0d0"/><rect x="1.5" y="8.5" width="9.5" height="5" fill="none" stroke="#d0d0d0"/></svg>
<svg style="position:absolute;left:251px;top:612px" width="14" height="15"><path d="M0 1.5H14" stroke="#d0d0d0"/><rect x="1.5" y="3.5" width="4" height="10" fill="none" stroke="#d0d0d0"/><rect x="8" y="3" width="5" height="6" fill="#d0d0d0"/></svg>
<div style="left:123px;top:638px;width:151px;height:1px;background:#3e3e3e;"></div>
<div style="left:123px;top:639px;width:151px;height:1px;background:#5a5a5a;"></div>
<div class="t" style="left:123px;top:645px;font-size:10px;color:#dadada;font-weight:normal;line-height:13px;">Objekte verteilen:</div>
<svg style="position:absolute;left:127px;top:669px" width="17" height="15"><path d="M0 1.5H17M2 13.5H15" stroke="#d0d0d0"/><rect x="5" y="2" width="7" height="4" fill="#d0d0d0"/><rect x="4.5" y="8.5" width="8" height="4" fill="none" stroke="#d0d0d0"/></svg>
<svg style="position:absolute;left:163px;top:669px" width="17" height="15"><path d="M0 4.5H17M0 10.5H17" stroke="#d0d0d0"/><rect x="5" y="1" width="7" height="4" fill="#d0d0d0"/><rect x="4.5" y="8.5" width="8" height="4" fill="none" stroke="#d0d0d0"/></svg>
<svg style="position:absolute;left:199px;top:669px" width="17" height="15"><path d="M2 6.5H15M0 13.5H17" stroke="#d0d0d0"/><rect x="5" y="2" width="7" height="4.5" fill="#d0d0d0"/><rect x="4.5" y="8.5" width="8" height="4.5" fill="none" stroke="#d0d0d0"/></svg>
<svg style="position:absolute;left:252px;top:669px" width="14" height="16"><path d="M1.5 0V16M7.5 3V14" stroke="#d0d0d0"/><rect x="3" y="4.5" width="3.5" height="7" fill="none" stroke="#d0d0d0"/><rect x="8" y="5" width="5" height="6" fill="#d0d0d0"/></svg>
<div style="left:123px;top:695px;width:151px;height:1px;background:#3e3e3e;"></div>
<div style="left:123px;top:696px;width:151px;height:1px;background:#5a5a5a;"></div>
<div class="t" style="left:123px;top:702px;font-size:10px;color:#dadada;font-weight:normal;line-height:13px;">Abstand verteilen:</div>
<svg style="position:absolute;left:128px;top:726px" width="15" height="15"><path d="M0 4.5H4M0 9.5H4" stroke="#d0d0d0"/><rect x="6" y="1" width="6" height="5" fill="#d0d0d0"/><rect x="5.5" y="8.5" width="8" height="5" fill="none" stroke="#d0d0d0"/></svg>
<svg style="position:absolute;left:160px;top:726px" width="14" height="16"><path d="M5.5 0V4M9.5 0V4" stroke="#d0d0d0"/><rect x="1.5" y="5.5" width="4" height="9" fill="none" stroke="#d0d0d0"/><rect x="8" y="6" width="5" height="6" fill="#d0d0d0"/></svg>
<div style="left:187px;top:725px;width:16px;height:17px;background:#4a4a4a;border:1px solid #3e3e3e;"><svg style="position:absolute;left:3px;top:2px" width="10" height="13"><path d="M1 5H9L5 1.5Z" fill="#7a7a7a"/><path d="M1 8H9L5 11.5Z" fill="#7a7a7a"/></svg></div>
<div style="left:203px;top:725px;width:57px;height:17px;background:#6e6e6e;"><div class="t" style="left:3px;top:2px;font-size:9.5px;color:#4a4a4a;line-height:12px">0 mm</div></div>
<div style="left:268px;top:696px;width:1px;height:55px;background:#4a4a4a;"></div>
<div style="left:118px;top:753px;width:230px;height:2px;background:#2c2c2c;"></div>
<div style="left:118px;top:755px;width:230px;height:17px;background:#3c3c3c;"></div>
<div style="left:118px;top:755px;width:91px;height:17px;background:#535353;"></div>
<svg style="position:absolute;left:122px;top:758px" width="6" height="11"><path d="M0.5 4.5L3 1.5L5.5 4.5M0.5 6.5L3 9.5L5.5 6.5" stroke="#d0d0d0" fill="none" stroke-width="1.1"/></svg>
<div class="t" style="left:131px;top:757px;font-size:9.6px;color:#e0e0e0;font-weight:bold;line-height:13px;">Transformieren</div>
<svg style="position:absolute;left:123px;top:791px" width="20" height="20"><rect x="0.5" y="0.5" width="4" height="4" fill="none" stroke="#d0d0d0" stroke-width="1.2"/><rect x="8.0" y="0.5" width="4" height="4" fill="none" stroke="#d0d0d0" stroke-width="1.2"/><rect x="15.5" y="0.5" width="4" height="4" fill="none" stroke="#d0d0d0" stroke-width="1.2"/><rect x="0.5" y="8.0" width="4" height="4" fill="none" stroke="#d0d0d0" stroke-width="1.2"/><rect x="7.5" y="7.5" width="5" height="5" fill="#d0d0d0"/><rect x="15.5" y="8.0" width="4" height="4" fill="none" stroke="#d0d0d0" stroke-width="1.2"/><rect x="0.5" y="15.5" width="4" height="4" fill="none" stroke="#d0d0d0" stroke-width="1.2"/><rect x="8.0" y="15.5" width="4" height="4" fill="none" stroke="#d0d0d0" stroke-width="1.2"/><rect x="15.5" y="15.5" width="4" height="4" fill="none" stroke="#d0d0d0" stroke-width="1.2"/><path d="M5 2.5H7.5M12.5 2.5H15.0M5 17.5H7.5M12.5 17.5H15.0M2.5 5V7.5M2.5 12.5V15.0M17.5 5V7.5M17.5 12.5V15.0" stroke="#d0d0d0" stroke-width="1.2"/></svg>
<div class="t" style="left:156px;top:782px;font-size:10px;color:#dadada;font-weight:normal;line-height:13px;">x:</div>
<div style="left:171px;top:780px;width:56px;height:18px;background:#adadad;border-top:1px solid #7a7a7a;"><div class="t" style="left:3px;top:2px;font-size:9.5px;color:#1a1a1a;line-height:13px">181,75 mm</div></div>
<div class="t" style="left:234px;top:782px;font-size:10px;color:#dadada;font-weight:normal;line-height:13px;">B:</div>
<div style="left:250px;top:780px;width:56px;height:18px;background:#adadad;border-top:1px solid #7a7a7a;"><div class="t" style="left:3px;top:2px;font-size:9.5px;color:#1a1a1a;line-height:13px">0,033 mm</div></div>
<div class="t" style="left:156px;top:808px;font-size:10px;color:#dadada;font-weight:normal;line-height:13px;">y:</div>
<div style="left:171px;top:806px;width:56px;height:18px;background:#adadad;border-top:1px solid #7a7a7a;"><div class="t" style="left:3px;top:2px;font-size:9.5px;color:#1a1a1a;line-height:13px">50,067 mm</div></div>
<div class="t" style="left:234px;top:808px;font-size:10px;color:#dadada;font-weight:normal;line-height:13px;">H:</div>
<div style="left:250px;top:806px;width:56px;height:18px;background:#adadad;border-top:1px solid #7a7a7a;"><div class="t" style="left:3px;top:2px;font-size:9.5px;color:#1a1a1a;line-height:13px">18,105 mm</div></div>
<svg style="position:absolute;left:150px;top:834px" width="20" height="12"><path d="M1 10.5H12M1 10.5L9 2" stroke="#d0d0d0" fill="none"/><path d="M5 7Q7 8 7 10" stroke="#d0d0d0" fill="none"/><text x="13" y="10" font-size="10" fill="#d0d0d0" font-family="Liberation Sans">:</text></svg>
<div style="left:171px;top:832px;width:38px;height:18px;background:#adadad;border-top:1px solid #7a7a7a;"><div class="t" style="left:3px;top:2px;font-size:9.5px;color:#1a1a1a;line-height:13px">0°</div></div>
<div style="left:209px;top:832px;width:16px;height:18px;background:#474747;border:1px solid #393939;"><svg style="position:absolute;left:3px;top:5px" width="9" height="7"><path d="M0 0.5H9L4.5 6Z" fill="#e0e0e0"/></svg></div>
<svg style="position:absolute;left:232px;top:834px" width="20" height="12"><path d="M1 10.5H8L12 1.5H5Z" stroke="#d0d0d0" fill="none"/><text x="13" y="10" font-size="10" fill="#d0d0d0" font-family="Liberation Sans">:</text></svg>
<div style="left:251px;top:832px;width:39px;height:18px;background:#adadad;border-top:1px solid #7a7a7a;"><div class="t" style="left:3px;top:2px;font-size:9.5px;color:#1a1a1a;line-height:13px">0°</div></div>
<div style="left:290px;top:832px;width:16px;height:18px;background:#474747;border:1px solid #393939;"><svg style="position:absolute;left:3px;top:5px" width="9" height="7"><path d="M0 0.5H9L4.5 6Z" fill="#e0e0e0"/></svg></div>
<div style="left:118px;top:856px;width:230px;height:3px;background:#2c2c2c;"></div>
<div style="left:118px;top:859px;width:230px;height:17px;background:#3c3c3c;"></div>
<div style="left:118px;top:859px;width:64px;height:17px;background:#535353;"></div>
<div class="t" style="left:125px;top:861px;font-size:10px;color:#e0e0e0;font-weight:bold;line-height:13px;">Pathfinder</div>
<svg style="position:absolute;left:330px;top:863px" width="15" height="9"><path d="M0 3H4L2 5.5Z" fill="#d0d0d0"/><path d="M5 1H14M5 4H14M5 7H14" stroke="#d0d0d0" stroke-width="1.2"/></svg>
<div class="t" style="left:123px;top:882px;font-size:10px;color:#dadada;font-weight:normal;line-height:13px;">Formmodi:</div>
<svg style="position:absolute;left:128px;top:905px" width="15" height="15"><rect x="1" y="1" width="9" height="9" fill="#9a9a9a" stroke="#c0c0c0"/><rect x="5" y="5" width="9" height="9" fill="#9a9a9a" stroke="#c0c0c0"/><rect x="5" y="5" width="5" height="5" fill="#9a9a9a"/></svg>
<svg style="position:absolute;left:160px;top:905px" width="15" height="15"><rect x="1" y="1" width="9" height="9" fill="#9a9a9a" stroke="#c0c0c0"/><rect x="5" y="5" width="9" height="9" fill="#535353" stroke="#777"/></svg>
<svg style="position:absolute;left:192px;top:905px" width="15" height="15"><rect x="1" y="1" width="9" height="9" fill="none" stroke="#c0c0c0"/><rect x="5" y="5" width="9" height="9" fill="none" stroke="#c0c0c0"/><rect x="5" y="5" width="5" height="5" fill="#9a9a9a"/></svg>
<svg style="position:absolute;left:225px;top:905px" width="15" height="15"><rect x="1" y="1" width="9" height="9" fill="#9a9a9a" stroke="#c0c0c0"/><rect x="5" y="5" width="9" height="9" fill="#9a9a9a" stroke="#c0c0c0"/><rect x="5.5" y="5.5" width="4" height="4" fill="#535353"/></svg>
<div style="left:254px;top:905px;width:88px;height:18px;background:#4e4e4e;border:1px solid #444;"><div class="t" style="left:16px;top:2px;font-size:10px;color:#7e7e7e;line-height:13px">Umwandeln</div></div>
<div class="t" style="left:123px;top:932px;font-size:10px;color:#dadada;font-weight:normal;line-height:13px;">Pathfinder:</div>
<svg style="position:absolute;left:131px;top:956px" width="15" height="15"><rect x="1" y="1" width="7" height="7" fill="none" stroke="#c0c0c0"/><rect x="4" y="4" width="7" height="7" fill="none" stroke="#c0c0c0"/><rect x="7" y="7" width="7" height="7" fill="#9a9a9a" stroke="#c0c0c0"/></svg>
<svg style="position:absolute;left:168px;top:956px" width="15" height="15"><rect x="1" y="1" width="7" height="7" fill="#9a9a9a"/><rect x="7" y="4" width="6" height="4" fill="#c8c8c8"/><rect x="4" y="8" width="10" height="6" fill="#c8c8c8"/></svg>
<svg style="position:absolute;left:205px;top:956px" width="15" height="15"><rect x="1" y="1" width="9" height="9" fill="#b8b8b8"/><rect x="6" y="6" width="8" height="8" fill="#b8b8b8" stroke="#666" stroke-width="0.6"/></svg>
<svg style="position:absolute;left:243px;top:956px" width="15" height="15"><rect x="1" y="1" width="9" height="9" fill="#6a6a6a"/><rect x="5" y="5" width="9" height="9" fill="#6a6a6a"/><rect x="5" y="5" width="5" height="5" fill="#c8c8c8"/></svg>
<svg style="position:absolute;left:280px;top:956px" width="15" height="15"><rect x="1" y="1" width="9" height="9" fill="none" stroke="#c0c0c0"/><rect x="5" y="5" width="9" height="9" fill="none" stroke="#c0c0c0"/><rect x="5" y="5" width="5" height="5" fill="none" stroke="#c0c0c0"/></svg>
<svg style="position:absolute;left:318px;top:956px" width="15" height="15"><rect x="1" y="1" width="9" height="9" fill="#444" stroke="#888"/><rect x="5" y="5" width="9" height="9" fill="#535353" stroke="#c0c0c0"/></svg>
<div style="left:274px;top:220px;width:364px;height:590px;border-radius:7px 7px 5px 5px;box-shadow:2px 3px 12px 3px rgba(0,0,0,0.55);"></div>
<div style="left:274px;top:220px;width:364px;height:590px;border-radius:7px 7px 5px 5px;border:1px solid #1f2a36;background:linear-gradient(180deg,rgba(90,140,210,0.30) 0%,rgba(70,125,205,0.36) 100%);"></div>
<div style="left:275px;top:221px;width:362px;height:588px;border-radius:6px 6px 4px 4px;border:1px solid rgba(255,255,255,0.45);"></div>
<div style="left:631px;top:249px;width:6px;height:555px;background:rgba(130,165,210,0.65);"></div>
<div style="left:349px;top:804px;width:288px;height:5px;background:rgba(130,165,210,0.55);border-radius:0 0 4px 0;"></div>
<div style="left:276px;top:222px;width:360px;height:27px;border-radius:5px 5px 0 0;background:linear-gradient(90deg,#dde9f6 0%,#d2e2f4 35%,#b9d3f0 55%,#cfe0f3 75%,#e3eef9 100%);"></div>
<div class="t" style="left:282px;top:229px;font-size:12px;color:#0a0a0a;font-weight:normal;line-height:15px;">Transformieren</div>
<div style="left:280px;top:248px;width:352px;height:556px;background:rgba(255,255,255,0.6);"></div>
<div style="left:281px;top:249px;width:350px;height:554px;background:#4f4f4f;border:1px solid #3e3e3e;"></div>
<div style="left:298px;top:281px;width:316px;height:81px;border:1px solid #383838;box-shadow:inset 1px 1px 0 #5a5a5a, 1px 1px 0 #5a5a5a;"></div><div style="left:304px;top:273px;width:56px;height:14px;background:#4f4f4f;"></div><div class="t" style="left:308px;top:273px;font-size:12px;color:#dcdcdc;font-weight:normal;line-height:15px;">Skalieren</div>
<div class="t" style="left:308px;top:301px;font-size:12px;color:#dcdcdc;font-weight:normal;line-height:15px;">Horizontal:</div>
<div style="left:373px;top:306px;width:147px;height:4px;background:#3a3a3a;border-radius:2px;border-bottom:1px solid #5e5e5e;"></div><svg style="position:absolute;left:440.5px;top:300px" width="12" height="12"><path d="M1.5 11V5L6 1L10.5 5V11Z" fill="#4a4a4a" stroke="#e8912d" stroke-width="1.2"/></svg>
<div style="left:527px;top:298px;width:78px;height:20px;background:#a9a9a9;border:1px solid #e8912d;box-shadow:inset 0 0 0 1px #f0c080;"></div><div style="left:530px;top:301px;width:36px;height:14px;background:#3d8ee0;"></div><div class="t" style="left:531px;top:301px;font-size:12px;color:#ffffff;font-weight:normal;line-height:16px;">100%</div>
<div class="t" style="left:322px;top:331px;font-size:12px;color:#dcdcdc;font-weight:normal;line-height:15px;">Vertikal:</div>
<div style="left:373px;top:336px;width:147px;height:4px;background:#3a3a3a;border-radius:2px;border-bottom:1px solid #5e5e5e;"></div><svg style="position:absolute;left:440.5px;top:330px" width="12" height="12"><path d="M1.5 11V5L6 1L10.5 5V11Z" fill="#3f3f3f" stroke="#3d3d3d" stroke-width="1.2"/></svg>
<div style="left:527px;top:329px;width:77px;height:18px;background:#a9a9a9;border-top:1px solid #6a6a6a;border-left:1px solid #7a7a7a;"></div><div class="t" style="left:530px;top:331px;font-size:12px;color:#1a1a1a;font-weight:normal;line-height:16px;">100%</div>
<div style="left:298px;top:387px;width:316px;height:81px;border:1px solid #383838;box-shadow:inset 1px 1px 0 #5a5a5a, 1px 1px 0 #5a5a5a;"></div><div style="left:304px;top:379px;width:72px;height:14px;background:#4f4f4f;"></div><div class="t" style="left:308px;top:379px;font-size:12px;color:#dcdcdc;font-weight:normal;line-height:15px;">Verschieben</div>
<div class="t" style="left:308px;top:407px;font-size:12px;color:#dcdcdc;font-weight:normal;line-height:15px;">Horizontal:</div>
<div style="left:373px;top:412px;width:147px;height:4px;background:#3a3a3a;border-radius:2px;border-bottom:1px solid #5e5e5e;"></div><svg style="position:absolute;left:440.5px;top:406px" width="12" height="12"><path d="M1.5 11V5L6 1L10.5 5V11Z" fill="#3f3f3f" stroke="#3d3d3d" stroke-width="1.2"/></svg>
<div style="left:527px;top:405px;width:77px;height:18px;background:#a9a9a9;border-top:1px solid #6a6a6a;border-left:1px solid #7a7a7a;"></div><div class="t" style="left:530px;top:407px;font-size:12px;color:#1a1a1a;font-weight:normal;line-height:16px;">0 mm</div>
<div class="t" style="left:322px;top:437px;font-size:12px;color:#dcdcdc;font-weight:normal;line-height:15px;">Vertikal:</div>
<div style="left:373px;top:442px;width:147px;height:4px;background:#3a3a3a;border-radius:2px;border-bottom:1px solid #5e5e5e;"></div><svg style="position:absolute;left:440.5px;top:436px" width="12" height="12"><path d="M1.5 11V5L6 1L10.5 5V11Z" fill="#3f3f3f" stroke="#3d3d3d" stroke-width="1.2"/></svg>
<div style="left:527px;top:435px;width:77px;height:18px;background:#a9a9a9;border-top:1px solid #6a6a6a;border-left:1px solid #7a7a7a;"></div><div class="t" style="left:530px;top:437px;font-size:12px;color:#1a1a1a;font-weight:normal;line-height:16px;">0 mm</div>
<div style="left:298px;top:493px;width:316px;height:67px;border:1px solid #383838;box-shadow:inset 1px 1px 0 #5a5a5a, 1px 1px 0 #5a5a5a;"></div><div style="left:304px;top:485px;width:46px;height:14px;background:#4f4f4f;"></div><div class="t" style="left:308px;top:485px;font-size:12px;color:#dcdcdc;font-weight:normal;line-height:15px;">Drehen</div>
<div class="t" style="left:326px;top:521px;font-size:12px;color:#dcdcdc;font-weight:normal;line-height:15px;">Winkel:</div>
<svg style="position:absolute;left:372px;top:511px" width="34" height="34"><circle cx="17" cy="17" r="16" fill="#5a5a5a" stroke="#353535" stroke-width="1.2"/><path d="M17 17L27 7" stroke="#2a2a2a" stroke-width="1"/><circle cx="17" cy="17" r="1" fill="#2a2a2a"/></svg>
<div style="left:414px;top:520px;width:56px;height:17px;background:#a9a9a9;border-top:1px solid #6a6a6a;border-left:1px solid #7a7a7a;"></div><div class="t" style="left:417px;top:522px;font-size:12px;color:#1a1a1a;font-weight:normal;line-height:15px;">45°</div>
<div style="left:298px;top:585px;width:316px;height:139px;border:1px solid #383838;box-shadow:inset 1px 1px 0 #5a5a5a, 1px 1px 0 #5a5a5a;"></div><div style="left:304px;top:577px;width:53px;height:14px;background:#4f4f4f;"></div><div class="t" style="left:308px;top:577px;font-size:12px;color:#dcdcdc;font-weight:normal;line-height:15px;">Optionen</div>
<div style="left:308px;top:602px;width:12px;height:12px;background:#4a4a4a;border:1px solid #3a3a3a;box-shadow:inset 1px 1px 0 #5e5e5e;"></div>
<div class="t" style="left:325px;top:601px;font-size:12px;color:#dcdcdc;font-weight:normal;line-height:15px;">x spiegeln</div>
<div style="left:308px;top:627px;width:12px;height:12px;background:#4a4a4a;border:1px solid #3a3a3a;box-shadow:inset 1px 1px 0 #5e5e5e;"></div>
<div class="t" style="left:325px;top:626px;font-size:12px;color:#dcdcdc;font-weight:normal;line-height:15px;">y spiegeln</div>
<div style="left:308px;top:652px;width:12px;height:12px;background:#4a4a4a;border:1px solid #3a3a3a;box-shadow:inset 1px 1px 0 #5e5e5e;"></div>
<div class="t" style="left:325px;top:651px;font-size:12px;color:#dcdcdc;font-weight:normal;line-height:15px;">Zufallswert</div>
<div style="left:406px;top:602px;width:12px;height:12px;background:#4a4a4a;border:1px solid #3a3a3a;box-shadow:inset 1px 1px 0 #5e5e5e;"></div>
<div class="t" style="left:423px;top:601px;font-size:12.4px;color:#dcdcdc;font-weight:normal;line-height:15px;">Konturen und Effekte skalieren</div>
<div style="left:406px;top:627px;width:12px;height:12px;background:#4a4a4a;border:1px solid #3a3a3a;box-shadow:inset 1px 1px 0 #5e5e5e;"></div><svg style="position:absolute;left:407px;top:627px" width="11" height="12"><path d="M2 6L4.5 9.5L10 1.5" stroke="#e8e8e8" stroke-width="1.6" fill="none"/></svg>
<div class="t" style="left:423px;top:626px;font-size:12.4px;color:#dcdcdc;font-weight:normal;line-height:15px;">Objekte transformieren</div>
<div style="left:406px;top:652px;width:12px;height:12px;background:#4a4a4a;border:1px solid #3a3a3a;box-shadow:inset 1px 1px 0 #5e5e5e;"></div><svg style="position:absolute;left:407px;top:652px" width="11" height="12"><path d="M2 6L4.5 9.5L10 1.5" stroke="#e8e8e8" stroke-width="1.6" fill="none"/></svg>
<div class="t" style="left:423px;top:651px;font-size:12.4px;color:#dcdcdc;font-weight:normal;line-height:15px;">Muster transformieren</div>
<div style="left:306px;top:677px;width:299px;height:1px;background:#3c3c3c;"></div>
<div style="left:306px;top:678px;width:299px;height:1px;background:#5a5a5a;"></div>
<svg style="position:absolute;left:307px;top:689px" width="19" height="19"><rect x="0.5" y="0.5" width="4" height="4" fill="none" stroke="#d0d0d0" stroke-width="1.2"/><rect x="7.5" y="0.5" width="4" height="4" fill="none" stroke="#d0d0d0" stroke-width="1.2"/><rect x="14.5" y="0.5" width="4" height="4" fill="none" stroke="#d0d0d0" stroke-width="1.2"/><rect x="0.5" y="7.5" width="4" height="4" fill="none" stroke="#d0d0d0" stroke-width="1.2"/><rect x="7.0" y="7.0" width="5" height="5" fill="#d0d0d0"/><rect x="14.5" y="7.5" width="4" height="4" fill="none" stroke="#d0d0d0" stroke-width="1.2"/><rect x="0.5" y="14.5" width="4" height="4" fill="none" stroke="#d0d0d0" stroke-width="1.2"/><rect x="7.5" y="14.5" width="4" height="4" fill="none" stroke="#d0d0d0" stroke-width="1.2"/><rect x="14.5" y="14.5" width="4" height="4" fill="none" stroke="#d0d0d0" stroke-width="1.2"/><path d="M5 2.5H7.0M12.0 2.5H14.0M5 16.5H7.0M12.0 16.5H14.0M2.5 5V7.0M2.5 12.0V14.0M16.5 5V7.0M16.5 12.0V14.0" stroke="#d0d0d0" stroke-width="1.2"/></svg>
<div class="t" style="left:420px;top:693px;font-size:12px;color:#dcdcdc;font-weight:normal;line-height:15px;">Kopien</div>
<div style="left:463px;top:690px;width:57px;height:18px;background:#a9a9a9;border-top:1px solid #6a6a6a;border-left:1px solid #7a7a7a;"></div><div class="t" style="left:466px;top:692px;font-size:12px;color:#1a1a1a;font-weight:normal;line-height:16px;">3</div>
<div style="left:298px;top:752px;width:12px;height:12px;background:#4a4a4a;border:1px solid #3a3a3a;box-shadow:inset 1px 1px 0 #5e5e5e;"></div>
<div class="t" style="left:315px;top:751px;font-size:12px;color:#dcdcdc;font-weight:normal;line-height:15px;">Vorschau</div>
<div style="left:426px;top:747px;width:92px;height:25px;background:#555;border:1px solid #252525;box-shadow:inset 0 0 0 1px #3a3a3a, inset 1px 1px 0 1px #666;"></div>
<div class="t" style="left:462px;top:753px;font-size:12px;color:#dcdcdc;font-weight:normal;line-height:15px;">OK</div>
<div style="left:524px;top:748px;width:90px;height:24px;background:#565656;border:1px solid #2e2e2e;box-shadow:inset 1px 1px 0 #666;"></div>
<div class="t" style="left:539px;top:753px;font-size:12px;color:#dcdcdc;font-weight:normal;line-height:15px;">Abbrechen</div>
<div style="left:1461px;top:545px;width:271px;height:331px;background:#535353;border:1px solid #262626;border-radius:3px 3px 0 0;box-shadow:0 2px 5px rgba(0,0,0,0.4);"></div>
<div style="left:1462px;top:546px;width:269px;height:13px;background:#2f2f2f;border-radius:3px 3px 0 0;"></div>
<svg style="position:absolute;left:1702px;top:549px" width="9" height="7"><path d="M4 0V7L0 3.5ZM8.5 0V7L4.5 3.5Z" fill="#cfcfcf"/></svg>
<svg style="position:absolute;left:1719px;top:549px" width="7" height="7"><path d="M0.5 0.5L6.5 6.5M6.5 0.5L0.5 6.5" stroke="#d8d8d8" stroke-width="1.4"/></svg>
<div style="left:1462px;top:559px;width:269px;height:17px;background:#3c3c3c;"></div>
<div style="left:1462px;top:559px;width:62px;height:17px;background:#535353;"></div>
<div class="t" style="left:1469px;top:561px;font-size:9.6px;color:#e0e0e0;font-weight:bold;line-height:13px;">Farbfelder</div>
<svg style="position:absolute;left:1713px;top:563px" width="15" height="9"><path d="M0 3H4L2 5.5Z" fill="#d0d0d0"/><path d="M5 1H14M5 4H14M5 7H14" stroke="#d0d0d0" stroke-width="1.2"/></svg>
<div style="left:1477px;top:592px;width:19px;height:19px;background:#f2dd9e;border:1px solid #2a2a2a;"><div style="left:4px;top:4px;width:9px;height:9px;background:#535353;border:1px solid #3a3a3a"></div></div>
<div style="left:1467px;top:582px;width:19px;height:19px;background:#fff;border:1px solid #2a2a2a;"><svg style="position:absolute;left:0px;top:0px" width="17" height="17"><path d="M0.5 16.5L16.5 0.5" stroke="#e01818" stroke-width="1.8"/></svg></div>
<div style="left:1674px;top:583px;width:51px;height:22px;background:#3a3a3a;border:1px solid #3a3a3a;"></div>
<div style="left:1700px;top:584px;width:24px;height:20px;background:#5e5e5e;"></div>
<svg style="position:absolute;left:1680px;top:587px" width="13" height="13"><path d="M0 2H13M0 5.5H13M0 9H13M0 12.5H13" stroke="#e0e0e0" stroke-width="1.6"/></svg>
<svg style="position:absolute;left:1706px;top:587px" width="13" height="13"><rect x="0.0" y="0.0" width="3.5" height="3.5" fill="#dcdcdc"/><rect x="0.0" y="4.5" width="3.5" height="3.5" fill="#dcdcdc"/><rect x="0.0" y="9.0" width="3.5" height="3.5" fill="#dcdcdc"/><rect x="4.5" y="0.0" width="3.5" height="3.5" fill="#dcdcdc"/><rect x="4.5" y="4.5" width="3.5" height="3.5" fill="#dcdcdc"/><rect x="4.5" y="9.0" width="3.5" height="3.5" fill="#dcdcdc"/><rect x="9.0" y="0.0" width="3.5" height="3.5" fill="#dcdcdc"/><rect x="9.0" y="4.5" width="3.5" height="3.5" fill="#dcdcdc"/><rect x="9.0" y="9.0" width="3.5" height="3.5" fill="#dcdcdc"/></svg>
<div style="left:1467px;top:617px;width:259px;height:231px;background:#535353;border:1px solid #3a3a3a;"></div>
<div style="left:1468px;top:618px;width:257px;height:19px;background:#677080;border-bottom:1px solid #3c3c3c;"></div>
<div style="left:1488px;top:620px;width:15px;height:15px;background:#fff;border:1px solid #222;"><svg style="position:absolute;left:0px;top:0px" width="13" height="13"><path d="M0.5 12.5L12.5 0.5" stroke="#e01818" stroke-width="1.6"/></svg></div>
<div class="t" style="left:1509px;top:621px;font-size:10px;color:#e4e4e4;font-weight:normal;line-height:13px;">[Ohne]</div>
<svg style="position:absolute;left:1709px;top:622px" width="12" height="12"><rect x="0.5" y="0.5" width="11" height="11" fill="#777" stroke="#ccc"/><path d="M1 11L11 1" stroke="#ddd"/></svg>
<div style="left:1468px;top:638px;width:257px;height:19px;background:#585858;border-bottom:1px solid #3c3c3c;"></div>
<div style="left:1488px;top:640px;width:15px;height:15px;background:#050505;border:1px solid #222;"></div>
<div class="t" style="left:1509px;top:641px;font-size:10px;color:#e4e4e4;font-weight:normal;line-height:13px;">[Passermarken]</div>
<svg style="position:absolute;left:1709px;top:642px" width="12" height="12"><rect x="0.5" y="0.5" width="11" height="11" fill="#999" stroke="#ccc"/><circle cx="6" cy="6" r="3" fill="none" stroke="#111"/><path d="M6 1V11M1 6H11" stroke="#111"/></svg>
<div style="left:1468px;top:658px;width:257px;height:19px;background:#585858;border-bottom:1px solid #3c3c3c;"></div>
<div style="left:1488px;top:660px;width:15px;height:15px;background:#fff;border:1px solid #222;"></div>
<div class="t" style="left:1509px;top:661px;font-size:10px;color:#e4e4e4;font-weight:normal;line-height:13px;">Weiß</div>
<svg style="position:absolute;left:1709px;top:661px" width="12" height="12"><rect x="0.5" y="0.5" width="11" height="11" fill="#ddd" stroke="#bbb"/><path d="M1 1L6 6L1 11Z" fill="#1fb8e8"/><path d="M1 1H11L6 6Z" fill="#e020c0"/><path d="M11 1V11L6 6Z" fill="#f0e020"/><path d="M1 11H11L6 6Z" fill="#111"/></svg>
<div style="left:1468px;top:678px;width:257px;height:19px;background:#585858;border-bottom:1px solid #3c3c3c;"></div>
<div style="left:1488px;top:680px;width:15px;height:15px;background:#050505;border:1px solid #222;"></div>
<div class="t" style="left:1509px;top:681px;font-size:10px;color:#e4e4e4;font-weight:normal;line-height:13px;">Schwarz</div>
<svg style="position:absolute;left:1709px;top:681px" width="12" height="12"><rect x="0.5" y="0.5" width="11" height="11" fill="#ddd" stroke="#bbb"/><path d="M1 1L6 6L1 11Z" fill="#1fb8e8"/><path d="M1 1H11L6 6Z" fill="#e020c0"/><path d="M11 1V11L6 6Z" fill="#f0e020"/><path d="M1 11H11L6 6Z" fill="#111"/></svg>
<div style="left:1468px;top:698px;width:257px;height:19px;background:#585858;border-bottom:1px solid #3c3c3c;"></div>
<svg style="position:absolute;left:1472px;top:704px" width="8" height="7"><path d="M0 0H8L4 6Z" fill="#d8d8d8"/></svg>
<svg style="position:absolute;left:1489px;top:702px" width="13" height="11"><path d="M0.5 1.5H5L6 3H12.5V10.5H0.5Z" fill="#bdbdbd"/></svg>
<div class="t" style="left:1509px;top:701px;font-size:10px;color:#e4e4e4;font-weight:normal;line-height:13px;">La Pizza</div>
<div style="left:1468px;top:718px;width:257px;height:19px;background:#585858;border-bottom:1px solid #3c3c3c;"></div>
<div style="left:1508px;top:720px;width:15px;height:15px;background:#f2dc9e;border:1px solid #222;"><svg style="position:absolute;left:6px;top:6px" width="8" height="8"><path d="M8 0V8H0Z" fill="#fff"/><path d="M8 0L0 8" stroke="#111" stroke-width="0.8"/><circle cx="5.5" cy="5.5" r="1" fill="#111"/></svg></div>
<div class="t" style="left:1529px;top:721px;font-size:9.6px;color:#e4e4e4;font-weight:normal;line-height:13px;">PANTONE 7401 C</div>
<svg style="position:absolute;left:1690px;top:721px" width="12" height="12"><rect x="0.5" y="0.5" width="11" height="11" fill="#777" stroke="#bbb"/><circle cx="6" cy="6" r="2.5" fill="#aaa" stroke="#ddd" stroke-width="0.8"/></svg>
<svg style="position:absolute;left:1709px;top:721px" width="12" height="12"><defs><linearGradient id="rg" x1="0" y1="0" x2="0" y2="1"><stop offset="0" stop-color="#f0f020"/><stop offset="0.3" stop-color="#20c040"/><stop offset="0.55" stop-color="#2060e0"/><stop offset="0.8" stop-color="#e02020"/><stop offset="1" stop-color="#c020c0"/></linearGradient></defs><rect x="0.5" y="0.5" width="11" height="11" fill="url(#rg)" stroke="#ccc"/></svg>
<div style="left:1468px;top:738px;width:257px;height:19px;background:#585858;border-bottom:1px solid #3c3c3c;"></div>
<div style="left:1508px;top:740px;width:15px;height:15px;background:#f0a020;border:1px solid #222;"><svg style="position:absolute;left:6px;top:6px" width="8" height="8"><path d="M8 0V8H0Z" fill="#fff"/><path d="M8 0L0 8" stroke="#111" stroke-width="0.8"/><circle cx="5.5" cy="5.5" r="1" fill="#111"/></svg></div>
<div class="t" style="left:1529px;top:741px;font-size:9.6px;color:#e4e4e4;font-weight:normal;line-height:13px;">PANTONE 130 C</div>
<svg style="position:absolute;left:1690px;top:741px" width="12" height="12"><rect x="0.5" y="0.5" width="11" height="11" fill="#777" stroke="#bbb"/><circle cx="6" cy="6" r="2.5" fill="#aaa" stroke="#ddd" stroke-width="0.8"/></svg>
<svg style="position:absolute;left:1709px;top:741px" width="12" height="12"><defs><linearGradient id="rg" x1="0" y1="0" x2="0" y2="1"><stop offset="0" stop-color="#f0f020"/><stop offset="0.3" stop-color="#20c040"/><stop offset="0.55" stop-color="#2060e0"/><stop offset="0.8" stop-color="#e02020"/><stop offset="1" stop-color="#c020c0"/></linearGradient></defs><rect x="0.5" y="0.5" width="11" height="11" fill="url(#rg)" stroke="#ccc"/></svg>
<div style="left:1468px;top:758px;width:257px;height:19px;background:#585858;border-bottom:1px solid #3c3c3c;"></div>
<div style="left:1508px;top:760px;width:15px;height:15px;background:#2a2420;border:1px solid #222;"><svg style="position:absolute;left:6px;top:6px" width="8" height="8"><path d="M8 0V8H0Z" fill="#fff"/><path d="M8 0L0 8" stroke="#111" stroke-width="0.8"/><circle cx="5.5" cy="5.5" r="1" fill="#111"/></svg></div>
<div class="t" style="left:1529px;top:761px;font-size:9.6px;color:#e4e4e4;font-weight:normal;line-height:13px;">PANTONE Black 4 C</div>
<svg style="position:absolute;left:1690px;top:761px" width="12" height="12"><rect x="0.5" y="0.5" width="11" height="11" fill="#777" stroke="#bbb"/><circle cx="6" cy="6" r="2.5" fill="#aaa" stroke="#ddd" stroke-width="0.8"/></svg>
<svg style="position:absolute;left:1709px;top:761px" width="12" height="12"><defs><linearGradient id="rg" x1="0" y1="0" x2="0" y2="1"><stop offset="0" stop-color="#f0f020"/><stop offset="0.3" stop-color="#20c040"/><stop offset="0.55" stop-color="#2060e0"/><stop offset="0.8" stop-color="#e02020"/><stop offset="1" stop-color="#c020c0"/></linearGradient></defs><rect x="0.5" y="0.5" width="11" height="11" fill="url(#rg)" stroke="#ccc"/></svg>
<div style="left:1468px;top:778px;width:257px;height:19px;background:#585858;border-bottom:1px solid #3c3c3c;"></div>
<div style="left:1508px;top:780px;width:15px;height:15px;background:#c0202a;border:1px solid #222;"><svg style="position:absolute;left:6px;top:6px" width="8" height="8"><path d="M8 0V8H0Z" fill="#fff"/><path d="M8 0L0 8" stroke="#111" stroke-width="0.8"/><circle cx="5.5" cy="5.5" r="1" fill="#111"/></svg></div>
<div class="t" style="left:1529px;top:781px;font-size:9.6px;color:#e4e4e4;font-weight:normal;line-height:13px;">PANTONE 7621 C</div>
<svg style="position:absolute;left:1690px;top:781px" width="12" height="12"><rect x="0.5" y="0.5" width="11" height="11" fill="#777" stroke="#bbb"/><circle cx="6" cy="6" r="2.5" fill="#aaa" stroke="#ddd" stroke-width="0.8"/></svg>
<svg style="position:absolute;left:1709px;top:781px" width="12" height="12"><defs><linearGradient id="rg" x1="0" y1="0" x2="0" y2="1"><stop offset="0" stop-color="#f0f020"/><stop offset="0.3" stop-color="#20c040"/><stop offset="0.55" stop-color="#2060e0"/><stop offset="0.8" stop-color="#e02020"/><stop offset="1" stop-color="#c020c0"/></linearGradient></defs><rect x="0.5" y="0.5" width="11" height="11" fill="url(#rg)" stroke="#ccc"/></svg>
<div style="left:1468px;top:798px;width:257px;height:19px;background:#585858;border-bottom:1px solid #3c3c3c;"></div>
<div style="left:1508px;top:800px;width:15px;height:15px;background:#8e1e24;border:1px solid #222;"><svg style="position:absolute;left:6px;top:6px" width="8" height="8"><path d="M8 0V8H0Z" fill="#fff"/><path d="M8 0L0 8" stroke="#111" stroke-width="0.8"/><circle cx="5.5" cy="5.5" r="1" fill="#111"/></svg></div>
<div class="t" style="left:1529px;top:801px;font-size:9.6px;color:#e4e4e4;font-weight:normal;line-height:13px;">PANTONE 1815 C</div>
<svg style="position:absolute;left:1690px;top:801px" width="12" height="12"><rect x="0.5" y="0.5" width="11" height="11" fill="#777" stroke="#bbb"/><circle cx="6" cy="6" r="2.5" fill="#aaa" stroke="#ddd" stroke-width="0.8"/></svg>
<svg style="position:absolute;left:1709px;top:801px" width="12" height="12"><defs><linearGradient id="rg" x1="0" y1="0" x2="0" y2="1"><stop offset="0" stop-color="#f0f020"/><stop offset="0.3" stop-color="#20c040"/><stop offset="0.55" stop-color="#2060e0"/><stop offset="0.8" stop-color="#e02020"/><stop offset="1" stop-color="#c020c0"/></linearGradient></defs><rect x="0.5" y="0.5" width="11" height="11" fill="url(#rg)" stroke="#ccc"/></svg>
<svg style="position:absolute;left:1469px;top:851px" width="18" height="12"><path d="M1 1V11M3.5 1V11M6 1L9 11" stroke="#d0d0d0" stroke-width="1.4"/><path d="M11 8H16L13.5 11Z" fill="#d0d0d0"/></svg>
<svg style="position:absolute;left:1500px;top:851px" width="12" height="12"><circle cx="8" cy="2" r="1.5" fill="#d0d0d0"/><circle cx="8" cy="10" r="1.5" fill="#d0d0d0"/><circle cx="4" cy="6" r="2.5" fill="none" stroke="#d0d0d0" stroke-width="1.2"/><path d="M4 6L8 2M4 6L8 10" stroke="#d0d0d0"/></svg>
<svg style="position:absolute;left:1586px;top:851px" width="18" height="12"><rect x="0.0" y="0.0" width="2.6" height="2.6" fill="#d0d0d0"/><rect x="0.0" y="3.5" width="2.6" height="2.6" fill="#d0d0d0"/><rect x="0.0" y="7.0" width="2.6" height="2.6" fill="#d0d0d0"/><rect x="3.5" y="0.0" width="2.6" height="2.6" fill="#d0d0d0"/><rect x="3.5" y="3.5" width="2.6" height="2.6" fill="#d0d0d0"/><rect x="3.5" y="7.0" width="2.6" height="2.6" fill="#d0d0d0"/><rect x="7.0" y="0.0" width="2.6" height="2.6" fill="#d0d0d0"/><rect x="7.0" y="3.5" width="2.6" height="2.6" fill="#d0d0d0"/><rect x="7.0" y="7.0" width="2.6" height="2.6" fill="#d0d0d0"/><path d="M11 8H16L13.5 11Z" fill="#d0d0d0"/></svg>
<svg style="position:absolute;left:1614px;top:851px" width="11" height="12"><rect x="0.5" y="0.5" width="10" height="10" fill="none" stroke="#6e6e6e"/><path d="M2 3H9M2 5.5H9M2 8H9" stroke="#6e6e6e"/></svg>
<svg style="position:absolute;left:1640px;top:851px" width="13" height="11"><path d="M0.5 1.5H5L6 3H12.5V10.5H0.5Z" fill="#d0d0d0"/></svg>
<svg style="position:absolute;left:1666px;top:851px" width="11" height="12"><rect x="3" y="0.5" width="8" height="9" fill="#6a6a6a"/><rect x="0.5" y="3" width="7" height="8" fill="#6a6a6a" stroke="#535353"/></svg>
<svg style="position:absolute;left:1692px;top:851px" width="11" height="12"><path d="M1 2.5H10M4 2.5V1H7V2.5M2 3.5V11H9V3.5" stroke="#6a6a6a" fill="none"/></svg>
<svg style="position:absolute;left:1721px;top:857px" width="7" height="7"><rect x="6" y="6" width="1" height="1" fill="#111"/><rect x="6" y="4" width="1" height="1" fill="#111"/><rect x="6" y="2" width="1" height="1" fill="#111"/><rect x="6" y="0" width="1" height="1" fill="#111"/><rect x="4" y="6" width="1" height="1" fill="#111"/><rect x="4" y="4" width="1" height="1" fill="#111"/><rect x="4" y="2" width="1" height="1" fill="#111"/><rect x="2" y="6" width="1" height="1" fill="#111"/><rect x="2" y="4" width="1" height="1" fill="#111"/><rect x="0" y="6" width="1" height="1" fill="#111"/></svg>
<div style="left:1462px;top:867px;width:269px;height:9px;background:#3e3e3e;border-top:1px solid #2a2a2a;"></div>
<svg style="position:absolute;left:1587px;top:869px" width="19" height="5"><rect x="0" y="0" width="1" height="5" fill="#111"/><rect x="2" y="0" width="1" height="5" fill="#111"/><rect x="4" y="0" width="1" height="5" fill="#111"/><rect x="6" y="0" width="1" height="5" fill="#111"/><rect x="8" y="0" width="1" height="5" fill="#111"/><rect x="10" y="0" width="1" height="5" fill="#111"/><rect x="12" y="0" width="1" height="5" fill="#111"/><rect x="14" y="0" width="1" height="5" fill="#111"/><rect x="16" y="0" width="1" height="5" fill="#111"/><rect x="18" y="0" width="1" height="5" fill="#111"/></svg>
</body></html>
